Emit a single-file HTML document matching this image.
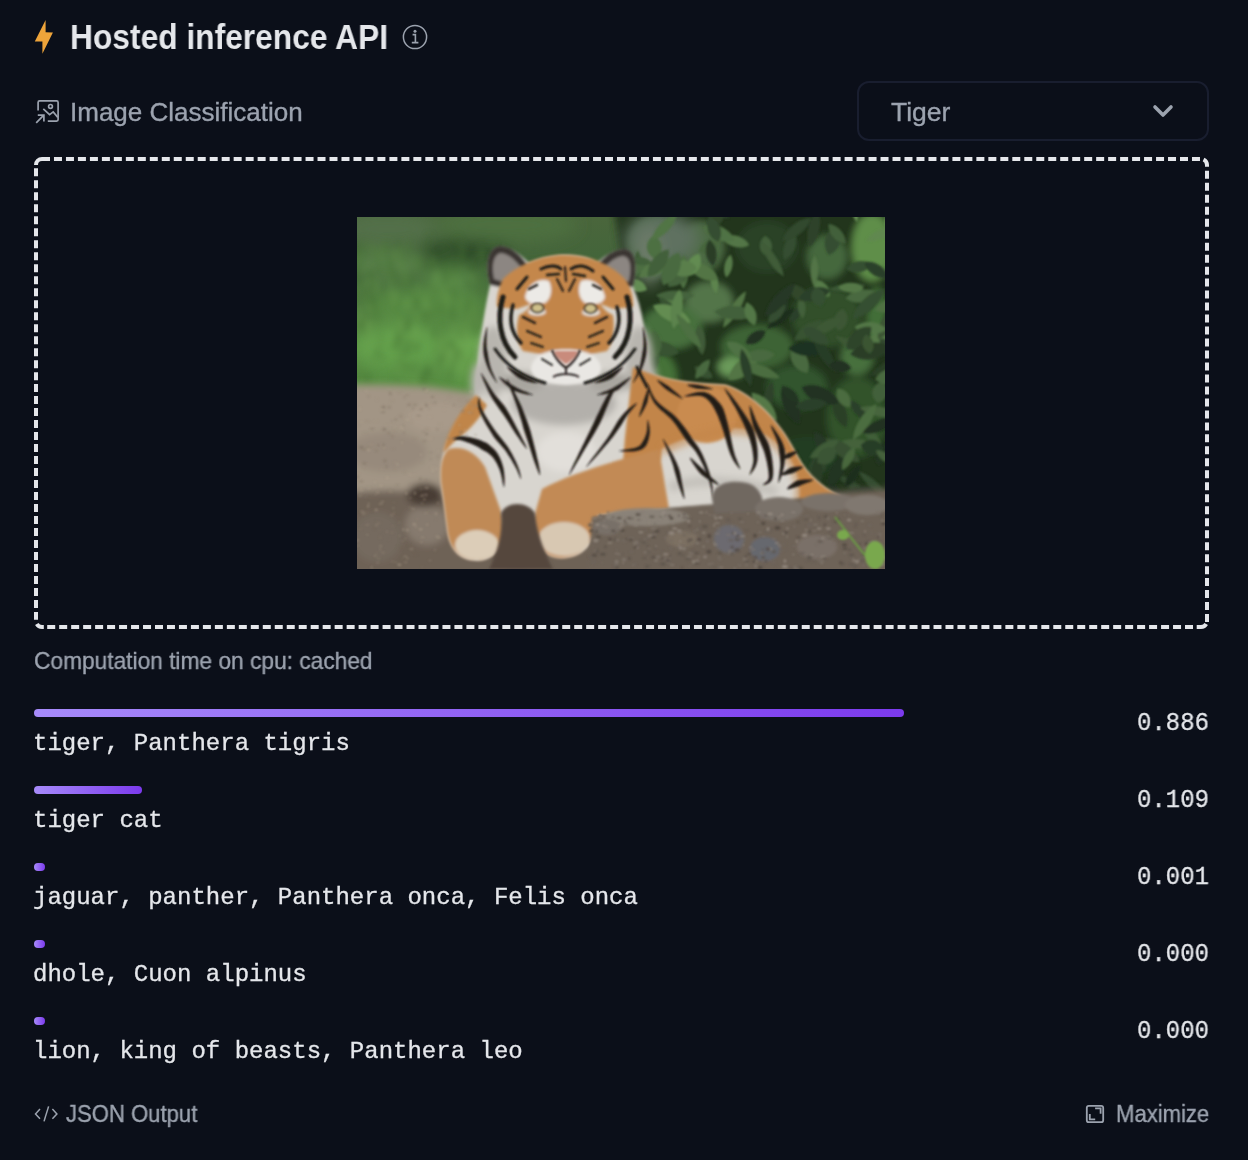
<!DOCTYPE html>
<html>
<head>
<meta charset="utf-8">
<style>
html,body{margin:0;padding:0;}
body{width:1248px;height:1160px;background:#0b0f19;position:relative;overflow:hidden;font-family:"Liberation Sans",sans-serif;}
.a{position:absolute;white-space:nowrap;line-height:1;will-change:transform;}
.sans{font-family:"Liberation Sans",sans-serif;}
.mono{font-family:"Liberation Mono",monospace;color:#e5e7eb;font-size:24px;-webkit-text-stroke:0.3px #e5e7eb;}
.gray{color:#9ca3af;-webkit-text-stroke:0.35px #9ca3af;}
.sc{font-size:25.5px;transform:scaleX(0.94);transform-origin:0 0;}
.bar{position:absolute;left:34px;height:8px;border-radius:4px;background:linear-gradient(to right,#a78bfa,#7c3aed);}
</style>
</head>
<body>
<!-- header -->
<svg class="a" style="left:30px;top:16px" width="28" height="42" viewBox="30 16 28 42">
  <path d="M45.6 20 L45.6 32.2 L52.9 32.4 L42.4 53.7 L42.4 41.6 L34.8 41.6 Z" fill="#eea43a"/>
</svg>
<div id="t1" class="a" style="left:70px;top:20px;font-size:35.5px;font-weight:bold;color:#e5e7eb;transform:scaleX(0.894);transform-origin:0 0;">Hosted inference API</div>
<svg class="a" style="left:400px;top:22px" width="30" height="30" viewBox="0 0 30 30">
  <circle cx="15" cy="15" r="11.6" fill="none" stroke="#9ca3af" stroke-width="1.5"/>
  <circle cx="15" cy="9.2" r="1.5" fill="#9ca3af"/>
  <path d="M12.6 12.6 H15.4 V20.6 M11.8 20.6 H18.4" fill="none" stroke="#9ca3af" stroke-width="1.6"/>
</svg>

<!-- task row -->
<svg class="a" style="left:34px;top:98px" width="28" height="28" viewBox="34 98 28 28">
  <g fill="none" stroke="#9ca3af" stroke-width="1.7">
    <path d="M38.1 110.6 V102.4 Q38.1 100.9 39.6 100.9 H56.6 Q58.1 100.9 58.1 102.4 V119.6 Q58.1 121.1 56.6 121.1 H47.8"/>
    <circle cx="50.5" cy="106.4" r="1.9"/>
    <path d="M43.3 108.9 L49.6 114.6 L53.2 111.9 L57.8 117.4"/>
    <path d="M36.2 122.8 L43.8 115.2 M37.8 115.2 H43.9 V121.4"/>
  </g>
</svg>
<div id="t2" class="a gray" style="left:70px;top:98.5px;font-size:26px;">Image Classification</div>

<div class="a" style="left:857px;top:81px;width:348px;height:56px;border:2px solid #191e2f;border-radius:12px;"></div>
<div id="t3" class="a gray" style="left:891px;top:98.5px;font-size:26.5px;">Tiger</div>
<svg class="a" style="left:1150px;top:100px" width="26" height="20" viewBox="1150 100 26 20">
  <path d="M1155 107 L1163 115 L1171 107" fill="none" stroke="#9ca3af" stroke-width="3.6" stroke-linecap="round" stroke-linejoin="round"/>
</svg>

<!-- dropzone -->
<svg class="a" style="left:0;top:0" width="1248" height="680" viewBox="0 0 1248 680">
  <g fill="none" stroke="#e5e7eb" stroke-width="4">
    <path d="M42 159 H1200.2" stroke-dasharray="8 3.979"/>
    <path d="M1207 170.8 V622.3" stroke-dasharray="8 3.98"/>
    <path d="M47.2 627 H1194.2" stroke-dasharray="8 3.977"/>
    <path d="M36 168.3 V619.8" stroke-dasharray="8 3.99"/>
    <path d="M36 165 A6 6 0 0 1 42 159 H42.2"/>
    <path d="M1203.54 159.56 A6 6 0 0 1 1207 165 V166.8"/>
    <path d="M1196.7 627 H1201 A6 6 0 0 0 1206.20 624.00"/>
    <path d="M36.80 624.00 A6 6 0 0 0 42 627 H43.8"/>
  </g>
</svg>
<div id="img" class="a" style="left:357px;top:217px;width:528px;height:352px;overflow:hidden;">
<svg width="528" height="352" viewBox="0 0 528 352">
<defs>
  
  <filter id="b0" x="-50%" y="-50%" width="200%" height="200%"><feGaussianBlur stdDeviation="18"/></filter>
  <filter id="b1" x="-50%" y="-50%" width="200%" height="200%"><feGaussianBlur stdDeviation="8"/></filter>
  <filter id="b2" x="-50%" y="-50%" width="200%" height="200%"><feGaussianBlur stdDeviation="3.5"/></filter>
  <filter id="b3" x="-50%" y="-50%" width="200%" height="200%"><feGaussianBlur stdDeviation="1.8"/></filter>
  <filter id="b4" x="-50%" y="-50%" width="200%" height="200%"><feGaussianBlur stdDeviation="0.9"/></filter>
  <linearGradient id="gm" x1="0" y1="0" x2="0" y2="1">
    <stop offset="0" stop-color="#4a663c"/>
    <stop offset="0.12" stop-color="#43653a"/>
    <stop offset="0.3" stop-color="#528040"/>
    <stop offset="0.55" stop-color="#5a9644"/>
    <stop offset="1" stop-color="#5e9a46"/>
  </linearGradient>
</defs>
<!-- meadow -->
<rect x="0" y="0" width="528" height="352" fill="url(#gm)"/>
<g filter="url(#b1)">
  <ellipse cx="30" cy="12" rx="50" ry="18" fill="#52704a"/>
  <ellipse cx="150" cy="8" rx="70" ry="18" fill="#4e7040"/>
  <ellipse cx="110" cy="36" rx="45" ry="12" fill="#2c4628"/>
  <ellipse cx="30" cy="48" rx="40" ry="14" fill="#58804a"/>
  <ellipse cx="70" cy="90" rx="60" ry="18" fill="#568a42"/>
  <ellipse cx="40" cy="130" rx="50" ry="22" fill="#64a04c"/>
  <ellipse cx="110" cy="135" rx="25" ry="25" fill="#6aa650"/>
  <ellipse cx="95" cy="62" rx="25" ry="12" fill="#5a8a48"/>
</g>
<g filter="url(#b2)" opacity="0.55"><path d="M39.6 165.4 l-0.9 -10.5" stroke="#4d7b39" stroke-width="2.8" stroke-linecap="round"/><path d="M120.3 171.5 l1.4 -7.6" stroke="#507f3b" stroke-width="2.4" stroke-linecap="round"/><path d="M-4.1 158.0 l-0.6 -12.6" stroke="#54843e" stroke-width="3.8" stroke-linecap="round"/><path d="M61.8 53.1 l0.8 -10.4" stroke="#355f27" stroke-width="3.8" stroke-linecap="round"/><path d="M7.9 118.4 l-2.1 -10.0" stroke="#51803b" stroke-width="2.6" stroke-linecap="round"/><path d="M70.6 161.4 l1.8 -9.9" stroke="#406c2f" stroke-width="3.9" stroke-linecap="round"/><path d="M23.6 48.0 l-0.1 -13.8" stroke="#5e8f45" stroke-width="2.1" stroke-linecap="round"/><path d="M114.6 52.8 l-0.6 -7.8" stroke="#578740" stroke-width="3.7" stroke-linecap="round"/><path d="M115.2 56.0 l0.1 -9.2" stroke="#3e692e" stroke-width="2.8" stroke-linecap="round"/><path d="M12.8 65.1 l-2.8 -13.2" stroke="#679a4b" stroke-width="3.1" stroke-linecap="round"/><path d="M104.8 35.4 l0.6 -6.9" stroke="#598941" stroke-width="3.1" stroke-linecap="round"/><path d="M85.9 73.5 l-0.4 -10.7" stroke="#54833e" stroke-width="3.3" stroke-linecap="round"/><path d="M59.8 92.2 l-0.1 -11.0" stroke="#3b662c" stroke-width="2.5" stroke-linecap="round"/><path d="M105.7 140.8 l-0.2 -7.4" stroke="#56863f" stroke-width="2.2" stroke-linecap="round"/><path d="M13.6 91.1 l0.1 -9.5" stroke="#3f6b2f" stroke-width="2.1" stroke-linecap="round"/><path d="M87.3 41.7 l0.1 -12.2" stroke="#54843e" stroke-width="2.1" stroke-linecap="round"/><path d="M68.1 83.7 l2.1 -7.1" stroke="#75aa56" stroke-width="4.0" stroke-linecap="round"/><path d="M101.2 145.7 l-0.0 -13.9" stroke="#467333" stroke-width="3.9" stroke-linecap="round"/><path d="M127.8 53.4 l-2.6 -13.4" stroke="#578740" stroke-width="2.7" stroke-linecap="round"/><path d="M104.6 52.5 l1.9 -8.2" stroke="#5c8c43" stroke-width="2.3" stroke-linecap="round"/><path d="M67.8 160.6 l0.0 -8.1" stroke="#477434" stroke-width="2.6" stroke-linecap="round"/><path d="M0.3 55.9 l1.1 -13.5" stroke="#3b662c" stroke-width="3.8" stroke-linecap="round"/><path d="M19.5 141.5 l0.8 -10.2" stroke="#416d30" stroke-width="2.7" stroke-linecap="round"/><path d="M121.6 108.8 l-2.4 -13.1" stroke="#5e8f45" stroke-width="4.0" stroke-linecap="round"/><path d="M86.3 86.0 l2.9 -8.1" stroke="#6c9f4f" stroke-width="3.2" stroke-linecap="round"/><path d="M47.2 138.6 l1.5 -7.4" stroke="#55853f" stroke-width="2.1" stroke-linecap="round"/><path d="M113.9 66.0 l0.5 -13.9" stroke="#629348" stroke-width="3.3" stroke-linecap="round"/><path d="M40.3 30.3 l0.7 -7.2" stroke="#366028" stroke-width="2.9" stroke-linecap="round"/><path d="M69.3 157.2 l0.9 -7.8" stroke="#426e31" stroke-width="2.0" stroke-linecap="round"/><path d="M-4.6 80.4 l-1.7 -8.9" stroke="#406c2f" stroke-width="3.2" stroke-linecap="round"/><path d="M80.4 59.0 l-2.2 -9.8" stroke="#507e3a" stroke-width="3.9" stroke-linecap="round"/><path d="M30.3 51.2 l2.2 -11.1" stroke="#38632a" stroke-width="3.6" stroke-linecap="round"/><path d="M53.3 67.5 l0.4 -11.2" stroke="#3a652b" stroke-width="2.7" stroke-linecap="round"/><path d="M88.6 93.0 l-1.5 -11.9" stroke="#75a955" stroke-width="3.8" stroke-linecap="round"/><path d="M1.4 105.5 l-2.6 -7.9" stroke="#53823d" stroke-width="3.6" stroke-linecap="round"/><path d="M-3.2 108.2 l-1.8 -7.1" stroke="#75aa55" stroke-width="3.2" stroke-linecap="round"/><path d="M68.5 121.1 l-1.1 -7.4" stroke="#6da050" stroke-width="2.6" stroke-linecap="round"/><path d="M2.0 156.3 l-3.0 -11.7" stroke="#6b9e4e" stroke-width="3.7" stroke-linecap="round"/><path d="M103.1 96.1 l-1.6 -9.6" stroke="#689b4c" stroke-width="2.2" stroke-linecap="round"/><path d="M28.7 35.5 l1.2 -12.0" stroke="#436f31" stroke-width="3.7" stroke-linecap="round"/><path d="M98.2 67.8 l1.7 -9.5" stroke="#5c8d44" stroke-width="3.0" stroke-linecap="round"/><path d="M33.5 121.2 l2.3 -7.7" stroke="#76ab56" stroke-width="2.0" stroke-linecap="round"/><path d="M32.8 63.5 l1.5 -13.6" stroke="#689b4c" stroke-width="2.7" stroke-linecap="round"/><path d="M122.6 76.7 l0.8 -13.3" stroke="#497635" stroke-width="3.4" stroke-linecap="round"/><path d="M91.5 169.0 l1.2 -12.7" stroke="#578740" stroke-width="3.7" stroke-linecap="round"/><path d="M58.4 132.9 l-1.7 -8.5" stroke="#5d8e44" stroke-width="3.2" stroke-linecap="round"/><path d="M6.3 159.3 l-2.4 -6.2" stroke="#436f31" stroke-width="3.9" stroke-linecap="round"/><path d="M45.0 50.1 l1.2 -6.3" stroke="#356028" stroke-width="3.3" stroke-linecap="round"/><path d="M96.1 134.6 l-0.8 -10.7" stroke="#3e692d" stroke-width="3.6" stroke-linecap="round"/><path d="M113.8 156.6 l2.5 -12.9" stroke="#3e692e" stroke-width="3.9" stroke-linecap="round"/><path d="M10.5 59.2 l2.1 -6.3" stroke="#39642a" stroke-width="3.6" stroke-linecap="round"/><path d="M87.0 147.2 l-2.4 -8.3" stroke="#619347" stroke-width="2.2" stroke-linecap="round"/><path d="M104.8 59.1 l-2.9 -9.4" stroke="#426f31" stroke-width="2.5" stroke-linecap="round"/><path d="M36.0 131.6 l2.8 -8.6" stroke="#51803b" stroke-width="3.0" stroke-linecap="round"/><path d="M118.4 117.8 l-0.4 -9.3" stroke="#3b672c" stroke-width="3.5" stroke-linecap="round"/><path d="M45.3 130.1 l2.2 -7.7" stroke="#5b8c43" stroke-width="2.2" stroke-linecap="round"/><path d="M113.9 54.2 l1.6 -7.6" stroke="#345e27" stroke-width="4.0" stroke-linecap="round"/><path d="M-4.4 99.7 l-1.9 -12.4" stroke="#588941" stroke-width="3.0" stroke-linecap="round"/><path d="M45.3 148.1 l-1.3 -13.6" stroke="#4a7836" stroke-width="2.4" stroke-linecap="round"/><path d="M96.4 100.8 l-2.5 -11.1" stroke="#406d30" stroke-width="3.6" stroke-linecap="round"/><path d="M96.1 141.7 l-0.6 -8.8" stroke="#619347" stroke-width="2.8" stroke-linecap="round"/><path d="M124.1 42.2 l-1.8 -6.2" stroke="#5b8c43" stroke-width="2.5" stroke-linecap="round"/><path d="M50.0 155.5 l0.2 -9.7" stroke="#487635" stroke-width="3.5" stroke-linecap="round"/><path d="M104.2 121.8 l-2.1 -8.6" stroke="#4f7e3a" stroke-width="3.7" stroke-linecap="round"/><path d="M91.0 135.4 l1.6 -9.5" stroke="#447132" stroke-width="3.2" stroke-linecap="round"/><path d="M13.3 95.6 l-1.9 -7.9" stroke="#71a653" stroke-width="2.6" stroke-linecap="round"/><path d="M97.0 149.8 l-1.5 -7.2" stroke="#437032" stroke-width="2.7" stroke-linecap="round"/><path d="M70.7 52.9 l2.9 -7.5" stroke="#436f31" stroke-width="3.5" stroke-linecap="round"/><path d="M9.8 166.7 l2.9 -9.1" stroke="#406c2f" stroke-width="3.6" stroke-linecap="round"/><path d="M101.3 91.8 l-2.4 -11.1" stroke="#467333" stroke-width="2.4" stroke-linecap="round"/><path d="M51.3 34.8 l1.2 -12.3" stroke="#467333" stroke-width="3.0" stroke-linecap="round"/><path d="M86.7 95.8 l-0.6 -10.8" stroke="#426f31" stroke-width="3.5" stroke-linecap="round"/><path d="M78.2 136.4 l1.3 -7.8" stroke="#54833e" stroke-width="3.8" stroke-linecap="round"/><path d="M107.2 129.4 l0.8 -11.4" stroke="#6fa351" stroke-width="2.9" stroke-linecap="round"/><path d="M40.4 119.2 l1.7 -9.4" stroke="#406c2f" stroke-width="3.4" stroke-linecap="round"/><path d="M86.3 65.5 l0.7 -9.6" stroke="#54843e" stroke-width="2.8" stroke-linecap="round"/><path d="M92.9 162.1 l1.7 -11.2" stroke="#457233" stroke-width="2.8" stroke-linecap="round"/><path d="M66.0 168.4 l-2.0 -10.3" stroke="#3c672c" stroke-width="3.6" stroke-linecap="round"/><path d="M9.7 111.6 l0.1 -11.7" stroke="#5c8c43" stroke-width="3.3" stroke-linecap="round"/><path d="M115.2 104.1 l-1.7 -13.6" stroke="#53833d" stroke-width="3.4" stroke-linecap="round"/><path d="M51.9 138.3 l-0.9 -13.9" stroke="#416d30" stroke-width="2.1" stroke-linecap="round"/><path d="M34.8 86.8 l-0.5 -9.3" stroke="#3a652b" stroke-width="3.4" stroke-linecap="round"/><path d="M46.1 67.7 l2.6 -11.9" stroke="#487535" stroke-width="3.1" stroke-linecap="round"/><path d="M26.7 143.8 l-2.2 -7.7" stroke="#52813c" stroke-width="3.6" stroke-linecap="round"/><path d="M112.4 120.1 l-1.6 -10.5" stroke="#578740" stroke-width="3.9" stroke-linecap="round"/><path d="M46.2 120.7 l-0.2 -12.5" stroke="#6da150" stroke-width="2.6" stroke-linecap="round"/><path d="M74.5 47.8 l2.1 -8.8" stroke="#598941" stroke-width="2.5" stroke-linecap="round"/><path d="M49.5 66.0 l-3.0 -7.5" stroke="#54843e" stroke-width="3.4" stroke-linecap="round"/><path d="M35.8 64.8 l-0.4 -9.8" stroke="#4d7b38" stroke-width="3.3" stroke-linecap="round"/><path d="M90.6 81.5 l-2.7 -12.8" stroke="#74a955" stroke-width="3.7" stroke-linecap="round"/><path d="M15.4 148.0 l-2.9 -6.1" stroke="#619347" stroke-width="3.9" stroke-linecap="round"/><path d="M90.1 65.5 l-1.6 -7.1" stroke="#406c2f" stroke-width="3.6" stroke-linecap="round"/><path d="M45.2 51.7 l-2.0 -12.3" stroke="#5c8d43" stroke-width="3.8" stroke-linecap="round"/><path d="M83.2 140.9 l1.7 -13.2" stroke="#649649" stroke-width="3.7" stroke-linecap="round"/><path d="M23.6 128.4 l-0.4 -11.9" stroke="#5b8c43" stroke-width="3.8" stroke-linecap="round"/><path d="M75.5 67.6 l-0.0 -7.1" stroke="#487635" stroke-width="2.1" stroke-linecap="round"/><path d="M62.7 50.5 l0.2 -10.0" stroke="#4a7736" stroke-width="3.7" stroke-linecap="round"/><path d="M-4.0 149.4 l1.0 -10.5" stroke="#578740" stroke-width="3.7" stroke-linecap="round"/><path d="M49.4 89.5 l0.8 -6.6" stroke="#76ab56" stroke-width="3.3" stroke-linecap="round"/><path d="M-0.9 116.6 l-1.0 -13.5" stroke="#65974a" stroke-width="4.0" stroke-linecap="round"/><path d="M69.0 98.8 l1.3 -6.3" stroke="#72a653" stroke-width="3.3" stroke-linecap="round"/><path d="M44.1 152.4 l0.2 -9.8" stroke="#517f3b" stroke-width="3.5" stroke-linecap="round"/><path d="M25.6 91.8 l2.0 -10.4" stroke="#54843e" stroke-width="2.6" stroke-linecap="round"/><path d="M115.0 87.3 l0.0 -8.2" stroke="#598a41" stroke-width="3.9" stroke-linecap="round"/><path d="M89.9 142.5 l-1.2 -8.5" stroke="#4e7d3a" stroke-width="3.2" stroke-linecap="round"/><path d="M87.0 141.4 l2.3 -11.8" stroke="#3c672c" stroke-width="3.1" stroke-linecap="round"/><path d="M2.2 72.7 l2.5 -7.5" stroke="#3a652b" stroke-width="3.2" stroke-linecap="round"/><path d="M90.4 142.0 l0.7 -10.9" stroke="#73a754" stroke-width="3.3" stroke-linecap="round"/><path d="M96.0 114.7 l1.0 -7.7" stroke="#649749" stroke-width="2.9" stroke-linecap="round"/><path d="M105.6 44.4 l1.6 -6.3" stroke="#3c682c" stroke-width="3.8" stroke-linecap="round"/><path d="M90.1 82.4 l0.4 -12.3" stroke="#6da150" stroke-width="2.5" stroke-linecap="round"/><path d="M38.8 89.9 l0.9 -9.4" stroke="#4e7c39" stroke-width="3.9" stroke-linecap="round"/><path d="M2.9 110.6 l1.9 -7.0" stroke="#3c672c" stroke-width="3.2" stroke-linecap="round"/><path d="M-3.0 85.0 l2.9 -13.5" stroke="#5f9045" stroke-width="3.0" stroke-linecap="round"/><path d="M54.8 44.5 l-2.1 -7.7" stroke="#517f3b" stroke-width="2.0" stroke-linecap="round"/><path d="M-4.3 127.1 l-2.5 -13.7" stroke="#416d30" stroke-width="3.7" stroke-linecap="round"/><path d="M13.7 32.5 l1.4 -7.9" stroke="#54833e" stroke-width="2.4" stroke-linecap="round"/><path d="M2.3 139.9 l1.4 -12.8" stroke="#66994b" stroke-width="2.2" stroke-linecap="round"/><path d="M86.2 130.7 l-1.5 -13.5" stroke="#57863f" stroke-width="3.9" stroke-linecap="round"/><path d="M99.0 31.6 l1.9 -11.2" stroke="#355f27" stroke-width="2.2" stroke-linecap="round"/><path d="M40.1 133.6 l-0.1 -12.9" stroke="#447132" stroke-width="2.1" stroke-linecap="round"/><path d="M48.3 111.6 l-2.1 -11.4" stroke="#55853e" stroke-width="3.6" stroke-linecap="round"/><path d="M47.7 121.6 l-0.7 -9.3" stroke="#619347" stroke-width="3.6" stroke-linecap="round"/><path d="M77.2 71.5 l1.2 -13.8" stroke="#3d692d" stroke-width="3.7" stroke-linecap="round"/><path d="M43.1 116.0 l0.6 -12.7" stroke="#77ac57" stroke-width="2.6" stroke-linecap="round"/><path d="M57.1 156.1 l0.6 -11.5" stroke="#51803c" stroke-width="3.8" stroke-linecap="round"/><path d="M112.1 70.2 l-0.5 -8.1" stroke="#3a652b" stroke-width="3.2" stroke-linecap="round"/><path d="M113.3 156.0 l1.9 -12.7" stroke="#3c682c" stroke-width="3.7" stroke-linecap="round"/><path d="M77.9 68.9 l1.1 -12.5" stroke="#6fa351" stroke-width="3.8" stroke-linecap="round"/><path d="M45.3 42.1 l-1.8 -12.4" stroke="#4d7b38" stroke-width="3.5" stroke-linecap="round"/><path d="M83.0 126.2 l-1.5 -7.7" stroke="#578740" stroke-width="3.5" stroke-linecap="round"/><path d="M109.8 95.3 l1.6 -12.5" stroke="#3f6b2e" stroke-width="2.5" stroke-linecap="round"/><path d="M79.0 157.4 l-0.1 -10.2" stroke="#71a653" stroke-width="3.2" stroke-linecap="round"/><path d="M22.4 57.3 l-0.8 -11.6" stroke="#3c672c" stroke-width="3.1" stroke-linecap="round"/><path d="M53.4 103.4 l3.0 -6.4" stroke="#436f31" stroke-width="2.7" stroke-linecap="round"/><path d="M10.4 119.8 l0.6 -7.2" stroke="#6b9e4e" stroke-width="2.7" stroke-linecap="round"/><path d="M70.3 32.9 l2.2 -13.9" stroke="#366028" stroke-width="3.0" stroke-linecap="round"/><path d="M77.2 67.1 l2.7 -9.4" stroke="#6b9e4e" stroke-width="3.5" stroke-linecap="round"/><path d="M113.7 166.8 l-1.8 -6.3" stroke="#4a7736" stroke-width="2.4" stroke-linecap="round"/><path d="M7.1 37.2 l-0.3 -13.0" stroke="#4d7b38" stroke-width="3.9" stroke-linecap="round"/><path d="M126.9 39.1 l-2.3 -9.2" stroke="#4e7d3a" stroke-width="3.9" stroke-linecap="round"/><path d="M32.3 110.2 l1.0 -13.7" stroke="#629448" stroke-width="2.8" stroke-linecap="round"/><path d="M60.0 52.7 l-1.7 -13.9" stroke="#5f9045" stroke-width="2.1" stroke-linecap="round"/><path d="M32.1 80.0 l2.0 -13.2" stroke="#72a754" stroke-width="2.1" stroke-linecap="round"/><path d="M109.0 130.8 l-2.7 -13.9" stroke="#629448" stroke-width="2.3" stroke-linecap="round"/><path d="M104.5 163.4 l0.5 -8.4" stroke="#649649" stroke-width="3.5" stroke-linecap="round"/><path d="M10.3 76.0 l-0.1 -7.0" stroke="#4a7736" stroke-width="2.3" stroke-linecap="round"/><path d="M29.6 50.3 l1.3 -6.1" stroke="#52813c" stroke-width="2.4" stroke-linecap="round"/><path d="M0.2 161.7 l2.2 -13.5" stroke="#477535" stroke-width="3.8" stroke-linecap="round"/><path d="M15.3 93.5 l2.1 -13.4" stroke="#406c2f" stroke-width="3.3" stroke-linecap="round"/><path d="M60.6 78.2 l0.8 -9.8" stroke="#6da150" stroke-width="2.3" stroke-linecap="round"/><path d="M27.1 38.1 l-2.1 -10.4" stroke="#54833d" stroke-width="3.7" stroke-linecap="round"/><path d="M33.6 88.5 l2.0 -8.2" stroke="#437032" stroke-width="2.7" stroke-linecap="round"/><path d="M19.3 99.7 l-2.3 -13.2" stroke="#4e7c39" stroke-width="4.0" stroke-linecap="round"/><path d="M3.2 157.1 l-0.1 -7.7" stroke="#649649" stroke-width="2.6" stroke-linecap="round"/><path d="M32.4 58.6 l3.0 -13.9" stroke="#447132" stroke-width="3.9" stroke-linecap="round"/><path d="M9.1 71.1 l1.4 -6.5" stroke="#72a653" stroke-width="2.6" stroke-linecap="round"/><path d="M136.9 32.3 l-2.2 -8.7" stroke="#588840" stroke-width="2.0" stroke-linecap="round"/><path d="M115.7 104.8 l2.5 -9.5" stroke="#457233" stroke-width="2.4" stroke-linecap="round"/><path d="M77.8 49.6 l1.3 -12.2" stroke="#3c672c" stroke-width="2.4" stroke-linecap="round"/><path d="M6.5 42.4 l-1.4 -10.0" stroke="#4f7e3a" stroke-width="2.4" stroke-linecap="round"/><path d="M83.8 130.5 l-1.8 -10.7" stroke="#6da04f" stroke-width="2.1" stroke-linecap="round"/><path d="M101.2 88.0 l1.9 -6.4" stroke="#679a4b" stroke-width="2.7" stroke-linecap="round"/><path d="M117.1 152.8 l2.5 -6.1" stroke="#598941" stroke-width="3.0" stroke-linecap="round"/><path d="M121.4 67.8 l-0.8 -12.7" stroke="#457233" stroke-width="2.3" stroke-linecap="round"/><path d="M48.8 114.5 l-0.3 -10.2" stroke="#3a652b" stroke-width="3.0" stroke-linecap="round"/><path d="M12.5 131.5 l-1.1 -12.9" stroke="#6da150" stroke-width="3.4" stroke-linecap="round"/><path d="M50.3 136.7 l2.7 -13.0" stroke="#3d692d" stroke-width="3.0" stroke-linecap="round"/><path d="M69.4 105.3 l2.8 -6.2" stroke="#5b8c43" stroke-width="2.4" stroke-linecap="round"/><path d="M21.4 44.6 l-2.8 -12.5" stroke="#3f6b2f" stroke-width="2.2" stroke-linecap="round"/><path d="M96.4 57.7 l0.5 -10.8" stroke="#355f27" stroke-width="3.0" stroke-linecap="round"/><path d="M96.9 44.6 l-2.7 -11.7" stroke="#5a8b42" stroke-width="2.2" stroke-linecap="round"/><path d="M66.6 101.1 l-0.6 -7.0" stroke="#4b7937" stroke-width="2.3" stroke-linecap="round"/><path d="M80.8 152.3 l1.5 -10.6" stroke="#436f31" stroke-width="2.3" stroke-linecap="round"/><path d="M114.8 163.1 l2.0 -9.4" stroke="#52813c" stroke-width="3.1" stroke-linecap="round"/><path d="M52.4 163.7 l-1.6 -8.7" stroke="#6a9e4e" stroke-width="2.7" stroke-linecap="round"/><path d="M58.2 169.3 l1.9 -13.3" stroke="#6ca04f" stroke-width="3.7" stroke-linecap="round"/><path d="M2.8 103.5 l-1.5 -13.5" stroke="#76ab56" stroke-width="2.8" stroke-linecap="round"/><path d="M86.7 81.7 l-0.4 -6.6" stroke="#5b8c43" stroke-width="3.0" stroke-linecap="round"/><path d="M-2.0 49.8 l2.6 -12.2" stroke="#5f9045" stroke-width="3.3" stroke-linecap="round"/><path d="M112.3 155.6 l0.8 -6.3" stroke="#71a653" stroke-width="2.5" stroke-linecap="round"/><path d="M93.4 68.8 l0.7 -13.4" stroke="#5c8c43" stroke-width="2.5" stroke-linecap="round"/><path d="M70.4 91.6 l-1.2 -8.3" stroke="#75aa56" stroke-width="3.3" stroke-linecap="round"/><path d="M12.5 114.4 l-1.4 -10.1" stroke="#76ab56" stroke-width="2.9" stroke-linecap="round"/><path d="M72.4 51.1 l-1.2 -7.1" stroke="#3a652b" stroke-width="2.8" stroke-linecap="round"/><path d="M36.8 64.6 l2.0 -10.4" stroke="#3f6b2e" stroke-width="3.2" stroke-linecap="round"/><path d="M77.7 122.4 l-0.2 -11.7" stroke="#467334" stroke-width="3.1" stroke-linecap="round"/><path d="M83.9 96.6 l-1.7 -7.9" stroke="#4d7b39" stroke-width="3.0" stroke-linecap="round"/><path d="M50.6 113.2 l2.2 -8.8" stroke="#3a652b" stroke-width="2.5" stroke-linecap="round"/><path d="M75.7 99.8 l-1.2 -13.9" stroke="#4b7937" stroke-width="3.5" stroke-linecap="round"/><path d="M18.0 39.5 l-2.6 -9.5" stroke="#5b8b42" stroke-width="2.8" stroke-linecap="round"/><path d="M58.8 134.4 l2.8 -7.8" stroke="#406d2f" stroke-width="3.5" stroke-linecap="round"/><path d="M17.4 77.9 l0.7 -11.4" stroke="#507e3b" stroke-width="3.7" stroke-linecap="round"/><path d="M114.1 103.5 l1.6 -11.9" stroke="#689b4c" stroke-width="3.0" stroke-linecap="round"/><path d="M108.8 130.6 l2.2 -7.0" stroke="#73a854" stroke-width="2.0" stroke-linecap="round"/><path d="M106.0 113.2 l0.4 -13.7" stroke="#598941" stroke-width="2.8" stroke-linecap="round"/><path d="M108.6 153.9 l-0.3 -9.0" stroke="#609146" stroke-width="2.9" stroke-linecap="round"/><path d="M99.8 71.6 l-0.7 -10.4" stroke="#52813c" stroke-width="2.6" stroke-linecap="round"/><path d="M109.1 150.6 l-1.9 -9.6" stroke="#598941" stroke-width="2.6" stroke-linecap="round"/><path d="M16.0 111.7 l2.5 -6.7" stroke="#5e8f45" stroke-width="2.6" stroke-linecap="round"/><path d="M117.3 149.0 l-0.4 -7.6" stroke="#76ab56" stroke-width="3.8" stroke-linecap="round"/><path d="M-3.4 36.7 l2.5 -10.0" stroke="#4d7b39" stroke-width="3.5" stroke-linecap="round"/><path d="M73.1 171.8 l1.1 -10.1" stroke="#5a8b42" stroke-width="2.8" stroke-linecap="round"/><path d="M46.9 114.5 l1.1 -13.6" stroke="#507e3a" stroke-width="3.1" stroke-linecap="round"/><path d="M9.4 83.2 l0.4 -10.5" stroke="#53823d" stroke-width="3.8" stroke-linecap="round"/><path d="M58.8 118.7 l0.2 -8.7" stroke="#78ae58" stroke-width="3.6" stroke-linecap="round"/><path d="M19.8 75.2 l0.1 -12.6" stroke="#77ac57" stroke-width="2.2" stroke-linecap="round"/><path d="M114.0 170.6 l-2.1 -9.4" stroke="#71a653" stroke-width="2.6" stroke-linecap="round"/><path d="M69.2 101.7 l0.8 -7.5" stroke="#457233" stroke-width="3.2" stroke-linecap="round"/><path d="M46.2 171.1 l-0.5 -6.3" stroke="#629347" stroke-width="3.6" stroke-linecap="round"/><path d="M39.5 128.1 l2.1 -8.4" stroke="#3a652b" stroke-width="3.2" stroke-linecap="round"/><path d="M91.9 57.9 l-1.4 -10.4" stroke="#4a7836" stroke-width="3.3" stroke-linecap="round"/><path d="M72.1 171.6 l-2.3 -9.3" stroke="#5e8f45" stroke-width="2.3" stroke-linecap="round"/><path d="M105.1 45.1 l0.1 -7.4" stroke="#39632a" stroke-width="3.6" stroke-linecap="round"/><path d="M83.9 144.5 l1.6 -6.1" stroke="#3d692d" stroke-width="2.6" stroke-linecap="round"/><path d="M98.7 80.2 l-2.4 -8.1" stroke="#447132" stroke-width="3.8" stroke-linecap="round"/><path d="M79.4 79.5 l-2.7 -9.1" stroke="#56863f" stroke-width="3.8" stroke-linecap="round"/><path d="M79.5 166.3 l-1.5 -11.0" stroke="#55853f" stroke-width="2.1" stroke-linecap="round"/><path d="M40.6 157.6 l0.6 -8.4" stroke="#6da050" stroke-width="3.9" stroke-linecap="round"/><path d="M66.9 164.9 l1.3 -9.1" stroke="#497636" stroke-width="2.4" stroke-linecap="round"/><path d="M39.8 154.3 l-1.5 -12.3" stroke="#588841" stroke-width="2.3" stroke-linecap="round"/><path d="M47.0 56.5 l0.4 -8.3" stroke="#5f9046" stroke-width="2.2" stroke-linecap="round"/><path d="M72.4 84.8 l-2.3 -6.5" stroke="#53823d" stroke-width="3.7" stroke-linecap="round"/><path d="M45.9 64.8 l-1.6 -8.3" stroke="#467333" stroke-width="2.1" stroke-linecap="round"/><path d="M91.3 78.5 l-2.4 -11.6" stroke="#437032" stroke-width="2.5" stroke-linecap="round"/><path d="M116.1 48.1 l1.8 -12.7" stroke="#487535" stroke-width="2.3" stroke-linecap="round"/><path d="M46.2 132.6 l-1.8 -13.7" stroke="#51803c" stroke-width="3.9" stroke-linecap="round"/><path d="M68.2 62.3 l1.2 -7.0" stroke="#56863f" stroke-width="2.5" stroke-linecap="round"/><path d="M48.4 65.0 l2.2 -7.7" stroke="#609146" stroke-width="2.2" stroke-linecap="round"/><path d="M69.4 107.0 l-0.7 -12.2" stroke="#4b7837" stroke-width="3.3" stroke-linecap="round"/><path d="M77.3 74.1 l-1.9 -6.7" stroke="#52813c" stroke-width="3.7" stroke-linecap="round"/><path d="M41.6 124.1 l-0.8 -10.5" stroke="#406d2f" stroke-width="3.0" stroke-linecap="round"/><path d="M38.1 39.4 l-2.2 -7.8" stroke="#426e31" stroke-width="3.4" stroke-linecap="round"/><path d="M35.9 87.3 l2.3 -12.2" stroke="#73a754" stroke-width="3.7" stroke-linecap="round"/><path d="M14.2 69.3 l1.0 -11.4" stroke="#3b672c" stroke-width="2.7" stroke-linecap="round"/><path d="M54.8 123.6 l2.1 -8.0" stroke="#66984a" stroke-width="2.7" stroke-linecap="round"/><path d="M86.2 55.8 l1.4 -13.3" stroke="#39642a" stroke-width="3.4" stroke-linecap="round"/><path d="M0.9 35.7 l-1.2 -7.6" stroke="#3b672c" stroke-width="2.8" stroke-linecap="round"/><path d="M0.7 74.2 l2.0 -7.4" stroke="#629348" stroke-width="3.1" stroke-linecap="round"/><path d="M98.9 66.2 l-0.9 -11.5" stroke="#55843e" stroke-width="2.0" stroke-linecap="round"/><path d="M116.0 140.3 l2.1 -6.3" stroke="#4c7a38" stroke-width="3.2" stroke-linecap="round"/><path d="M1.9 64.7 l-1.7 -12.3" stroke="#416d30" stroke-width="3.8" stroke-linecap="round"/><path d="M103.7 42.2 l1.5 -9.1" stroke="#53823d" stroke-width="3.7" stroke-linecap="round"/><path d="M35.8 42.8 l2.6 -9.4" stroke="#5e8f45" stroke-width="3.4" stroke-linecap="round"/><path d="M102.1 147.9 l-2.7 -9.6" stroke="#619347" stroke-width="3.4" stroke-linecap="round"/><path d="M57.1 102.7 l1.6 -7.0" stroke="#74a955" stroke-width="2.1" stroke-linecap="round"/><path d="M96.9 144.4 l2.8 -10.4" stroke="#4a7836" stroke-width="3.3" stroke-linecap="round"/></g>
<!-- foliage right -->
<g filter="url(#b2)">
  <path d="M255 -20 H560 V300 H300 L285 180 Z" fill="#24361f"/>
  <ellipse cx="298" cy="30" rx="26" ry="30" fill="#4a6a44"/>
  <ellipse cx="345" cy="30" rx="22" ry="25" fill="#4c6a42"/>
  <ellipse cx="352" cy="85" rx="24" ry="20" fill="#527448"/>
  <ellipse cx="315" cy="110" rx="30" ry="22" fill="#46703c"/>
  <ellipse cx="300" cy="160" rx="20" ry="25" fill="#447238"/>
  <ellipse cx="410" cy="30" rx="30" ry="25" fill="#2a4228"/>
  <ellipse cx="470" cy="100" rx="35" ry="30" fill="#30502c"/>
  <ellipse cx="470" cy="40" rx="20" ry="22" fill="#45683c"/>
  <ellipse cx="515" cy="30" rx="20" ry="34" fill="#5e8e48"/>
  <ellipse cx="400" cy="130" rx="36" ry="22" fill="#3c6434"/>
  <ellipse cx="440" cy="170" rx="30" ry="22" fill="#33552e"/>
  <ellipse cx="500" cy="200" rx="30" ry="40" fill="#30522c"/>
  <ellipse cx="500" cy="140" rx="16" ry="18" fill="#46703c"/>
  <ellipse cx="450" cy="240" rx="30" ry="20" fill="#223e22"/>
  <ellipse cx="375" cy="150" rx="14" ry="10" fill="#6a9a5a"/>
  <ellipse cx="520" cy="100" rx="10" ry="30" fill="#426e38"/>
</g>
<g filter="url(#b1)">
  <ellipse cx="305" cy="22" rx="38" ry="26" fill="#5e7160"/>
  <ellipse cx="292" cy="40" rx="12" ry="30" fill="#6e7d6a"/>
</g>
<g filter="url(#b4)"><path transform="translate(352.0 30.3) rotate(66)" d="M0 -10.9 C8.2 -5.4 8.2 5.4 0 10.9 C-8.2 5.4 -8.2 -5.4 0 -10.9Z" fill="#47663d"/><path transform="translate(278.1 137.2) rotate(16)" d="M0 -15.2 C5.4 -7.6 5.4 7.6 0 15.2 C-5.4 7.6 -5.4 -7.6 0 -15.2Z" fill="#395333"/><path transform="translate(296.4 52.0) rotate(71)" d="M0 -21.4 C8.5 -10.7 8.5 10.7 0 21.4 C-8.5 10.7 -8.5 -10.7 0 -21.4Z" fill="#547747"/><path transform="translate(533.4 -1.0) rotate(21)" d="M0 -13.5 C5.9 -6.7 5.9 6.7 0 13.5 C-5.9 6.7 -5.9 -6.7 0 -13.5Z" fill="#6c9858"/><path transform="translate(439.6 96.7) rotate(37)" d="M0 -10.8 C5.4 -5.4 5.4 5.4 0 10.8 C-5.4 5.4 -5.4 -5.4 0 -10.8Z" fill="#2c412a"/><path transform="translate(451.2 113.3) rotate(54)" d="M0 -17.0 C7.7 -8.5 7.7 8.5 0 17.0 C-7.7 8.5 -7.7 -8.5 0 -17.0Z" fill="#385232"/><path transform="translate(482.8 194.7) rotate(158)" d="M0 -16.9 C8.2 -8.4 8.2 8.4 0 16.9 C-8.2 8.4 -8.2 -8.4 0 -16.9Z" fill="#2a3f28"/><path transform="translate(464.8 71.4) rotate(136)" d="M0 -11.4 C7.5 -5.7 7.5 5.7 0 11.4 C-7.5 5.7 -7.5 -5.7 0 -11.4Z" fill="#567b48"/><path transform="translate(304.3 131.7) rotate(103)" d="M0 -18.0 C9.6 -9.0 9.6 9.0 0 18.0 C-9.6 9.0 -9.6 -9.0 0 -18.0Z" fill="#395333"/><path transform="translate(505.4 79.1) rotate(82)" d="M0 -17.1 C8.5 -8.6 8.5 8.6 0 17.1 C-8.5 8.6 -8.5 -8.6 0 -17.1Z" fill="#49693f"/><path transform="translate(495.5 268.4) rotate(126)" d="M0 -18.0 C5.4 -9.0 5.4 9.0 0 18.0 C-5.4 9.0 -5.4 -9.0 0 -18.0Z" fill="#32492e"/><path transform="translate(490.5 70.4) rotate(83)" d="M0 -18.0 C5.1 -9.0 5.1 9.0 0 18.0 C-5.1 9.0 -5.1 -9.0 0 -18.0Z" fill="#3b5635"/><path transform="translate(475.6 23.8) rotate(15)" d="M0 -14.7 C10.2 -7.3 10.2 7.3 0 14.7 C-10.2 7.3 -10.2 -7.3 0 -14.7Z" fill="#354d30"/><path transform="translate(386.9 149.8) rotate(50)" d="M0 -19.8 C10.2 -9.9 10.2 9.9 0 19.8 C-10.2 9.9 -10.2 -9.9 0 -19.8Z" fill="#527545"/><path transform="translate(377.5 92.6) rotate(32)" d="M0 -21.5 C5.9 -10.7 5.9 10.7 0 21.5 C-5.9 10.7 -5.9 -10.7 0 -21.5Z" fill="#527545"/><path transform="translate(326.5 55.0) rotate(1)" d="M0 -17.1 C6.6 -8.5 6.6 8.5 0 17.1 C-6.6 8.5 -6.6 -8.5 0 -17.1Z" fill="#4d6f42"/><path transform="translate(378.5 95.8) rotate(93)" d="M0 -21.4 C9.1 -10.7 9.1 10.7 0 21.4 C-9.1 10.7 -9.1 -10.7 0 -21.4Z" fill="#43613b"/><path transform="translate(433.7 187.9) rotate(157)" d="M0 -20.8 C9.7 -10.4 9.7 10.4 0 20.8 C-9.7 10.4 -9.7 -10.4 0 -20.8Z" fill="#223322"/><path transform="translate(483.8 102.7) rotate(11)" d="M0 -11.2 C8.8 -5.6 8.8 5.6 0 11.2 C-8.8 5.6 -8.8 -5.6 0 -11.2Z" fill="#3c5735"/><path transform="translate(280.7 47.6) rotate(0)" d="M0 -14.1 C5.3 -7.0 5.3 7.0 0 14.1 C-5.3 7.0 -5.3 -7.0 0 -14.1Z" fill="#3f5b37"/><path transform="translate(432.7 29.6) rotate(22)" d="M0 -14.2 C7.2 -7.1 7.2 7.1 0 14.2 C-7.2 7.1 -7.2 -7.1 0 -14.2Z" fill="#354e30"/><path transform="translate(498.0 282.9) rotate(18)" d="M0 -15.8 C5.5 -7.9 5.5 7.9 0 15.8 C-5.5 7.9 -5.5 -7.9 0 -15.8Z" fill="#31482d"/><path transform="translate(357.3 64.4) rotate(171)" d="M0 -11.9 C5.1 -6.0 5.1 6.0 0 11.9 C-5.1 6.0 -5.1 -6.0 0 -11.9Z" fill="#5d844d"/><path transform="translate(408.9 29.0) rotate(176)" d="M0 -10.3 C8.2 -5.2 8.2 5.2 0 10.3 C-8.2 5.2 -8.2 -5.2 0 -10.3Z" fill="#42603a"/><path transform="translate(502.0 193.9) rotate(139)" d="M0 -14.4 C6.0 -7.2 6.0 7.2 0 14.4 C-6.0 7.2 -6.0 -7.2 0 -14.4Z" fill="#2b4029"/><path transform="translate(410.1 218.7) rotate(177)" d="M0 -12.7 C9.9 -6.3 9.9 6.3 0 12.7 C-9.9 6.3 -9.9 -6.3 0 -12.7Z" fill="#395333"/><path transform="translate(499.0 226.8) rotate(93)" d="M0 -18.9 C6.4 -9.4 6.4 9.4 0 18.9 C-6.4 9.4 -6.4 -9.4 0 -18.9Z" fill="#44623b"/><path transform="translate(360.8 -6.3) rotate(125)" d="M0 -13.4 C6.6 -6.7 6.6 6.7 0 13.4 C-6.6 6.7 -6.6 -6.7 0 -13.4Z" fill="#2b4029"/><path transform="translate(527.9 119.2) rotate(66)" d="M0 -21.9 C10.7 -10.9 10.7 10.9 0 21.9 C-10.7 10.9 -10.7 -10.9 0 -21.9Z" fill="#547847"/><path transform="translate(323.3 53.1) rotate(162)" d="M0 -12.5 C8.7 -6.2 8.7 6.2 0 12.5 C-8.7 6.2 -8.7 -6.2 0 -12.5Z" fill="#405d38"/><path transform="translate(495.6 128.8) rotate(119)" d="M0 -19.6 C5.5 -9.8 5.5 9.8 0 19.6 C-5.5 9.8 -5.5 -9.8 0 -19.6Z" fill="#3d5836"/><path transform="translate(514.9 219.7) rotate(142)" d="M0 -15.7 C6.1 -7.9 6.1 7.9 0 15.7 C-6.1 7.9 -6.1 -7.9 0 -15.7Z" fill="#415e39"/><path transform="translate(532.1 103.8) rotate(31)" d="M0 -21.4 C9.3 -10.7 9.3 10.7 0 21.4 C-9.3 10.7 -9.3 -10.7 0 -21.4Z" fill="#3c5735"/><path transform="translate(297.3 30.3) rotate(176)" d="M0 -11.8 C10.0 -5.9 10.0 5.9 0 11.8 C-10.0 5.9 -10.0 -5.9 0 -11.8Z" fill="#4e7043"/><path transform="translate(444.7 90.1) rotate(175)" d="M0 -11.6 C5.1 -5.8 5.1 5.8 0 11.6 C-5.1 5.8 -5.1 -5.8 0 -11.6Z" fill="#43603a"/><path transform="translate(442.6 143.0) rotate(149)" d="M0 -15.2 C10.2 -7.6 10.2 7.6 0 15.2 C-10.2 7.6 -10.2 -7.6 0 -15.2Z" fill="#49693f"/><path transform="translate(320.7 60.6) rotate(47)" d="M0 -12.9 C8.5 -6.4 8.5 6.4 0 12.9 C-8.5 6.4 -8.5 -6.4 0 -12.9Z" fill="#45633c"/><path transform="translate(378.5 24.3) rotate(105)" d="M0 -14.2 C7.7 -7.1 7.7 7.1 0 14.2 C-7.7 7.1 -7.7 -7.1 0 -14.2Z" fill="#537646"/><path transform="translate(513.4 111.2) rotate(94)" d="M0 -16.0 C8.2 -8.0 8.2 8.0 0 16.0 C-8.2 8.0 -8.2 -8.0 0 -16.0Z" fill="#537746"/><path transform="translate(267.2 117.0) rotate(31)" d="M0 -10.0 C9.8 -5.0 9.8 5.0 0 10.0 C-9.8 5.0 -9.8 -5.0 0 -10.0Z" fill="#405c38"/><path transform="translate(393.6 202.6) rotate(100)" d="M0 -13.9 C8.1 -7.0 8.1 7.0 0 13.9 C-8.1 7.0 -8.1 -7.0 0 -13.9Z" fill="#43603a"/><path transform="translate(480.0 16.8) rotate(139)" d="M0 -13.0 C6.7 -6.5 6.7 6.5 0 13.0 C-6.7 6.5 -6.7 -6.5 0 -13.0Z" fill="#43613a"/><path transform="translate(403.1 153.5) rotate(110)" d="M0 -20.9 C7.7 -10.5 7.7 10.5 0 20.9 C-7.7 10.5 -7.7 -10.5 0 -20.9Z" fill="#4c6d41"/><path transform="translate(402.5 138.6) rotate(86)" d="M0 -15.4 C8.2 -7.7 8.2 7.7 0 15.4 C-8.2 7.7 -8.2 -7.7 0 -15.4Z" fill="#49693f"/><path transform="translate(523.7 194.8) rotate(101)" d="M0 -21.3 C6.6 -10.7 6.6 10.7 0 21.3 C-6.6 10.7 -6.6 -10.7 0 -21.3Z" fill="#47653d"/><path transform="translate(524.2 237.0) rotate(13)" d="M0 -11.5 C7.7 -5.7 7.7 5.7 0 11.5 C-7.7 5.7 -7.7 -5.7 0 -11.5Z" fill="#233423"/><path transform="translate(479.9 254.1) rotate(26)" d="M0 -18.6 C9.0 -9.3 9.0 9.3 0 18.6 C-9.0 9.3 -9.0 -9.3 0 -18.6Z" fill="#233523"/><path transform="translate(507.4 275.3) rotate(88)" d="M0 -21.4 C7.4 -10.7 7.4 10.7 0 21.4 C-7.4 10.7 -7.4 -10.7 0 -21.4Z" fill="#263925"/><path transform="translate(537.2 234.7) rotate(61)" d="M0 -15.2 C8.1 -7.6 8.1 7.6 0 15.2 C-8.1 7.6 -8.1 -7.6 0 -15.2Z" fill="#243623"/><path transform="translate(316.4 80.6) rotate(79)" d="M0 -10.2 C8.3 -5.1 8.3 5.1 0 10.2 C-8.3 5.1 -8.3 -5.1 0 -10.2Z" fill="#587d4a"/><path transform="translate(267.0 84.4) rotate(177)" d="M0 -16.1 C5.4 -8.1 5.4 8.1 0 16.1 C-5.4 8.1 -5.4 -8.1 0 -16.1Z" fill="#547746"/><path transform="translate(481.2 276.5) rotate(140)" d="M0 -13.2 C5.2 -6.6 5.2 6.6 0 13.2 C-5.2 6.6 -5.2 -6.6 0 -13.2Z" fill="#213222"/><path transform="translate(515.4 230.7) rotate(103)" d="M0 -11.8 C10.5 -5.9 10.5 5.9 0 11.8 C-10.5 5.9 -10.5 -5.9 0 -11.8Z" fill="#283c27"/><path transform="translate(456.7 11.8) rotate(13)" d="M0 -18.3 C7.6 -9.1 7.6 9.1 0 18.3 C-7.6 9.1 -7.6 -9.1 0 -18.3Z" fill="#2d422a"/><path transform="translate(522.9 175.3) rotate(12)" d="M0 -11.0 C10.1 -5.5 10.1 5.5 0 11.0 C-10.1 5.5 -10.1 -5.5 0 -11.0Z" fill="#43613b"/><path transform="translate(501.9 121.1) rotate(48)" d="M0 -16.6 C10.6 -8.3 10.6 8.3 0 16.6 C-10.6 8.3 -10.6 -8.3 0 -16.6Z" fill="#2e442b"/><path transform="translate(297.9 143.1) rotate(9)" d="M0 -11.3 C6.0 -5.7 6.0 5.7 0 11.3 C-6.0 5.7 -6.0 -5.7 0 -11.3Z" fill="#425f3a"/><path transform="translate(318.1 78.6) rotate(90)" d="M0 -19.1 C6.7 -9.6 6.7 9.6 0 19.1 C-6.7 9.6 -6.7 -9.6 0 -19.1Z" fill="#45633c"/><path transform="translate(311.5 89.1) rotate(132)" d="M0 -13.0 C5.1 -6.5 5.1 6.5 0 13.0 C-5.1 6.5 -5.1 -6.5 0 -13.0Z" fill="#385232"/><path transform="translate(415.2 41.8) rotate(147)" d="M0 -21.2 C5.6 -10.6 5.6 10.6 0 21.2 C-5.6 10.6 -5.6 -10.6 0 -21.2Z" fill="#3f5b38"/><path transform="translate(382.1 133.5) rotate(124)" d="M0 -14.7 C8.0 -7.4 8.0 7.4 0 14.7 C-8.0 7.4 -8.0 -7.4 0 -14.7Z" fill="#507244"/><path transform="translate(535.1 87.8) rotate(73)" d="M0 -18.5 C8.8 -9.2 8.8 9.2 0 18.5 C-8.8 9.2 -8.8 -9.2 0 -18.5Z" fill="#4f7143"/><path transform="translate(358.6 1.3) rotate(46)" d="M0 -10.8 C9.4 -5.4 9.4 5.4 0 10.8 C-9.4 5.4 -9.4 -5.4 0 -10.8Z" fill="#30462c"/><path transform="translate(307.4 10.3) rotate(44)" d="M0 -18.0 C6.7 -9.0 6.7 9.0 0 18.0 C-6.7 9.0 -6.7 -9.0 0 -18.0Z" fill="#517445"/><path transform="translate(343.5 122.8) rotate(173)" d="M0 -15.3 C6.6 -7.7 6.6 7.7 0 15.3 C-6.6 7.7 -6.6 -7.7 0 -15.3Z" fill="#3f5a37"/><path transform="translate(532.4 149.1) rotate(64)" d="M0 -21.6 C6.9 -10.8 6.9 10.8 0 21.6 C-6.9 10.8 -6.9 -10.8 0 -21.6Z" fill="#2a3f28"/><path transform="translate(262.3 99.5) rotate(91)" d="M0 -16.0 C6.2 -8.0 6.2 8.0 0 16.0 C-6.2 8.0 -6.2 -8.0 0 -16.0Z" fill="#4d6e42"/><path transform="translate(263.4 64.3) rotate(4)" d="M0 -14.8 C5.3 -7.4 5.3 7.4 0 14.8 C-5.3 7.4 -5.3 -7.4 0 -14.8Z" fill="#3c5635"/><path transform="translate(346.6 54.8) rotate(118)" d="M0 -16.4 C9.5 -8.2 9.5 8.2 0 16.4 C-9.5 8.2 -9.5 -8.2 0 -16.4Z" fill="#527545"/><path transform="translate(461.0 248.7) rotate(27)" d="M0 -13.9 C10.9 -7.0 10.9 7.0 0 13.9 C-10.9 7.0 -10.9 -7.0 0 -13.9Z" fill="#2e442b"/><path transform="translate(463.3 178.0) rotate(113)" d="M0 -20.0 C10.4 -10.0 10.4 10.0 0 20.0 C-10.4 10.0 -10.4 -10.0 0 -20.0Z" fill="#213222"/><path transform="translate(466.0 228.7) rotate(150)" d="M0 -16.3 C8.0 -8.1 8.0 8.1 0 16.3 C-8.0 8.1 -8.0 -8.1 0 -16.3Z" fill="#253825"/><path transform="translate(485.7 232.9) rotate(125)" d="M0 -20.7 C9.1 -10.4 9.1 10.4 0 20.7 C-9.1 10.4 -9.1 -10.4 0 -20.7Z" fill="#375031"/><path transform="translate(362.3 16.5) rotate(113)" d="M0 -16.7 C8.8 -8.4 8.8 8.4 0 16.7 C-8.8 8.4 -8.8 -8.4 0 -16.7Z" fill="#507244"/><path transform="translate(451.2 131.8) rotate(91)" d="M0 -19.6 C9.5 -9.8 9.5 9.8 0 19.6 C-9.5 9.8 -9.5 -9.8 0 -19.6Z" fill="#1f3020"/><path transform="translate(410.8 182.8) rotate(13)" d="M0 -18.8 C6.5 -9.4 6.5 9.4 0 18.8 C-6.5 9.4 -6.5 -9.4 0 -18.8Z" fill="#2d422a"/><path transform="translate(533.3 133.2) rotate(138)" d="M0 -15.7 C9.1 -7.9 9.1 7.9 0 15.7 C-9.1 7.9 -9.1 -7.9 0 -15.7Z" fill="#30472d"/><path transform="translate(433.5 177.8) rotate(134)" d="M0 -11.8 C6.5 -5.9 6.5 5.9 0 11.8 C-6.5 5.9 -6.5 -5.9 0 -11.8Z" fill="#233423"/><path transform="translate(346.6 155.3) rotate(121)" d="M0 -10.7 C6.6 -5.4 6.6 5.4 0 10.7 C-6.6 5.4 -6.6 -5.4 0 -10.7Z" fill="#385132"/><path transform="translate(454.4 187.7) rotate(84)" d="M0 -16.2 C7.8 -8.1 7.8 8.1 0 16.2 C-7.8 8.1 -7.8 -8.1 0 -16.2Z" fill="#2c412a"/><path transform="translate(522.3 -9.7) rotate(81)" d="M0 -19.8 C10.8 -9.9 10.8 9.9 0 19.8 C-10.8 9.9 -10.8 -9.9 0 -19.8Z" fill="#5a7f4b"/><path transform="translate(336.7 48.0) rotate(26)" d="M0 -12.5 C8.5 -6.3 8.5 6.3 0 12.5 C-8.5 6.3 -8.5 -6.3 0 -12.5Z" fill="#628b51"/><path transform="translate(457.5 54.4) rotate(1)" d="M0 -15.8 C5.1 -7.9 5.1 7.9 0 15.8 C-5.1 7.9 -5.1 -7.9 0 -15.8Z" fill="#527546"/><path transform="translate(398.7 120.2) rotate(57)" d="M0 -11.7 C7.1 -5.8 7.1 5.8 0 11.7 C-7.1 5.8 -7.1 -5.8 0 -11.7Z" fill="#213221"/><path transform="translate(495.6 -14.5) rotate(167)" d="M0 -20.1 C5.7 -10.0 5.7 10.0 0 20.1 C-5.7 10.0 -5.7 -10.0 0 -20.1Z" fill="#679155"/><path transform="translate(460.2 255.5) rotate(180)" d="M0 -14.5 C7.4 -7.2 7.4 7.2 0 14.5 C-7.4 7.2 -7.4 -7.2 0 -14.5Z" fill="#2a3e28"/><path transform="translate(425.8 93.2) rotate(18)" d="M0 -13.3 C5.3 -6.7 5.3 6.7 0 13.3 C-5.3 6.7 -5.3 -6.7 0 -13.3Z" fill="#273a26"/><path transform="translate(494.0 70.7) rotate(92)" d="M0 -13.0 C6.6 -6.5 6.6 6.5 0 13.0 C-6.6 6.5 -6.6 -6.5 0 -13.0Z" fill="#547847"/><path transform="translate(314.8 97.0) rotate(114)" d="M0 -20.6 C9.9 -10.3 9.9 10.3 0 20.6 C-9.9 10.3 -9.9 -10.3 0 -20.6Z" fill="#638c51"/><path transform="translate(515.9 267.2) rotate(132)" d="M0 -18.6 C5.3 -9.3 5.3 9.3 0 18.6 C-5.3 9.3 -5.3 -9.3 0 -18.6Z" fill="#354e30"/><path transform="translate(387.3 210.8) rotate(167)" d="M0 -13.4 C5.3 -6.7 5.3 6.7 0 13.4 C-5.3 6.7 -5.3 -6.7 0 -13.4Z" fill="#47663d"/><path transform="translate(297.4 126.7) rotate(176)" d="M0 -13.6 C9.4 -6.8 9.4 6.8 0 13.6 C-9.4 6.8 -9.4 -6.8 0 -13.6Z" fill="#47663d"/><path transform="translate(345.6 152.2) rotate(37)" d="M0 -12.0 C6.0 -6.0 6.0 6.0 0 12.0 C-6.0 6.0 -6.0 -6.0 0 -12.0Z" fill="#49693f"/><path transform="translate(513.9 134.1) rotate(81)" d="M0 -20.9 C11.0 -10.4 11.0 10.4 0 20.9 C-11.0 10.4 -11.0 -10.4 0 -20.9Z" fill="#293d27"/><path transform="translate(357.1 12.3) rotate(160)" d="M0 -13.1 C8.4 -6.6 8.4 6.6 0 13.1 C-8.4 6.6 -8.4 -6.6 0 -13.1Z" fill="#354d30"/><path transform="translate(470.4 108.8) rotate(61)" d="M0 -16.3 C7.3 -8.1 7.3 8.1 0 16.3 C-7.3 8.1 -7.3 -8.1 0 -16.3Z" fill="#3d5836"/><path transform="translate(279.3 68.3) rotate(113)" d="M0 -11.5 C8.0 -5.8 8.0 5.8 0 11.5 C-8.0 5.8 -8.0 -5.8 0 -11.5Z" fill="#638c52"/><path transform="translate(501.9 49.8) rotate(80)" d="M0 -13.0 C7.4 -6.5 7.4 6.5 0 13.0 C-7.4 6.5 -7.4 -6.5 0 -13.0Z" fill="#364f31"/><path transform="translate(527.2 239.6) rotate(128)" d="M0 -10.3 C5.2 -5.1 5.2 5.1 0 10.3 C-5.2 5.1 -5.2 -5.1 0 -10.3Z" fill="#44613b"/><path transform="translate(511.0 127.0) rotate(167)" d="M0 -10.0 C7.3 -5.0 7.3 5.0 0 10.0 C-7.3 5.0 -7.3 -5.0 0 -10.0Z" fill="#3a5433"/><path transform="translate(491.5 241.6) rotate(28)" d="M0 -13.0 C5.7 -6.5 5.7 6.5 0 13.0 C-5.7 6.5 -5.7 -6.5 0 -13.0Z" fill="#48683e"/><path transform="translate(407.2 189.6) rotate(138)" d="M0 -18.7 C8.9 -9.3 8.9 9.3 0 18.7 C-8.9 9.3 -8.9 -9.3 0 -18.7Z" fill="#547847"/><path transform="translate(389.1 150.5) rotate(166)" d="M0 -19.4 C6.4 -9.7 6.4 9.7 0 19.4 C-6.4 9.7 -6.4 -9.7 0 -19.4Z" fill="#2c4129"/><path transform="translate(441.5 76.1) rotate(126)" d="M0 -13.0 C8.8 -6.5 8.8 6.5 0 13.0 C-8.8 6.5 -8.8 -6.5 0 -13.0Z" fill="#30462c"/><path transform="translate(424.0 101.4) rotate(54)" d="M0 -17.2 C5.1 -8.6 5.1 8.6 0 17.2 C-5.1 8.6 -5.1 -8.6 0 -17.2Z" fill="#1e2d1f"/><path transform="translate(441.2 250.1) rotate(173)" d="M0 -12.8 C6.5 -6.4 6.5 6.4 0 12.8 C-6.5 6.4 -6.5 -6.4 0 -12.8Z" fill="#32492e"/><path transform="translate(457.9 77.2) rotate(76)" d="M0 -16.0 C9.0 -8.0 9.0 8.0 0 16.0 C-9.0 8.0 -9.0 -8.0 0 -16.0Z" fill="#2b4029"/><path transform="translate(519.2 53.0) rotate(123)" d="M0 -14.1 C7.5 -7.0 7.5 7.0 0 14.1 C-7.5 7.0 -7.5 -7.0 0 -14.1Z" fill="#2c4029"/><path transform="translate(467.5 136.5) rotate(148)" d="M0 -21.6 C6.9 -10.8 6.9 10.8 0 21.6 C-6.9 10.8 -6.9 -10.8 0 -21.6Z" fill="#283c27"/><path transform="translate(326.2 51.4) rotate(89)" d="M0 -13.5 C10.7 -6.8 10.7 6.8 0 13.5 C-10.7 6.8 -10.7 -6.8 0 -13.5Z" fill="#5a7f4b"/><path transform="translate(314.1 52.0) rotate(26)" d="M0 -18.0 C10.7 -9.0 10.7 9.0 0 18.0 C-10.7 9.0 -10.7 -9.0 0 -18.0Z" fill="#4a6a40"/><path transform="translate(371.4 48.9) rotate(11)" d="M0 -11.7 C5.3 -5.9 5.3 5.9 0 11.7 C-5.3 5.9 -5.3 -5.9 0 -11.7Z" fill="#567a48"/><path transform="translate(507.6 204.8) rotate(33)" d="M0 -21.2 C7.0 -10.6 7.0 10.6 0 21.2 C-7.0 10.6 -7.0 -10.6 0 -21.2Z" fill="#4c6d41"/><path transform="translate(522.2 208.9) rotate(67)" d="M0 -18.0 C7.3 -9.0 7.3 9.0 0 18.0 C-7.3 9.0 -7.3 -9.0 0 -18.0Z" fill="#213121"/><path transform="translate(354.2 35.8) rotate(172)" d="M0 -13.4 C7.1 -6.7 7.1 6.7 0 13.4 C-7.1 6.7 -7.1 -6.7 0 -13.4Z" fill="#2a3e28"/><path transform="translate(319.7 92.0) rotate(9)" d="M0 -19.9 C7.6 -9.9 7.6 9.9 0 19.9 C-7.6 9.9 -7.6 -9.9 0 -19.9Z" fill="#5c834d"/><path transform="translate(393.6 96.8) rotate(161)" d="M0 -12.3 C7.2 -6.2 7.2 6.2 0 12.3 C-7.2 6.2 -7.2 -6.2 0 -12.3Z" fill="#537746"/><path transform="translate(270.4 108.2) rotate(6)" d="M0 -19.2 C5.2 -9.6 5.2 9.6 0 19.2 C-5.2 9.6 -5.2 -9.6 0 -19.2Z" fill="#5c834d"/><path transform="translate(511.8 86.7) rotate(47)" d="M0 -21.5 C8.7 -10.7 8.7 10.7 0 21.5 C-8.7 10.7 -8.7 -10.7 0 -21.5Z" fill="#364f31"/><path transform="translate(461.2 79.9) rotate(165)" d="M0 -10.0 C9.5 -5.0 9.5 5.0 0 10.0 C-9.5 5.0 -9.5 -5.0 0 -10.0Z" fill="#364f31"/><path transform="translate(268.7 55.2) rotate(70)" d="M0 -21.5 C10.7 -10.7 10.7 10.7 0 21.5 C-10.7 10.7 -10.7 -10.7 0 -21.5Z" fill="#4d6e42"/><path transform="translate(331.8 114.0) rotate(144)" d="M0 -21.1 C6.1 -10.6 6.1 10.6 0 21.1 C-6.1 10.6 -6.1 -10.6 0 -21.1Z" fill="#4e6f42"/><path transform="translate(467.3 231.8) rotate(58)" d="M0 -17.3 C7.0 -8.6 7.0 8.6 0 17.3 C-7.0 8.6 -7.0 -8.6 0 -17.3Z" fill="#3f5b38"/><path transform="translate(284.0 44.2) rotate(99)" d="M0 -10.8 C5.2 -5.4 5.2 5.4 0 10.8 C-5.2 5.4 -5.2 -5.4 0 -10.8Z" fill="#43603a"/><path transform="translate(507.6 281.3) rotate(90)" d="M0 -11.0 C5.6 -5.5 5.6 5.5 0 11.0 C-5.6 5.5 -5.6 -5.5 0 -11.0Z" fill="#283c27"/><path transform="translate(459.3 119.1) rotate(121)" d="M0 -15.0 C8.7 -7.5 8.7 7.5 0 15.0 C-8.7 7.5 -8.7 -7.5 0 -15.0Z" fill="#354d30"/><path transform="translate(469.9 239.1) rotate(53)" d="M0 -11.5 C10.0 -5.7 10.0 5.7 0 11.5 C-10.0 5.7 -10.0 -5.7 0 -11.5Z" fill="#3a5534"/><path transform="translate(419.6 96.9) rotate(44)" d="M0 -12.4 C6.5 -6.2 6.5 6.2 0 12.4 C-6.5 6.2 -6.5 -6.2 0 -12.4Z" fill="#354d30"/><path transform="translate(422.8 82.9) rotate(42)" d="M0 -21.9 C8.0 -11.0 8.0 11.0 0 21.9 C-8.0 11.0 -8.0 -11.0 0 -21.9Z" fill="#253825"/><path transform="translate(486.7 181.0) rotate(147)" d="M0 -11.2 C7.8 -5.6 7.8 5.6 0 11.2 C-7.8 5.6 -7.8 -5.6 0 -11.2Z" fill="#4c6c41"/><path transform="translate(495.7 259.3) rotate(34)" d="M0 -13.5 C5.7 -6.8 5.7 6.8 0 13.5 C-5.7 6.8 -5.7 -6.8 0 -13.5Z" fill="#1e2e1f"/><path transform="translate(532.5 160.0) rotate(81)" d="M0 -14.5 C10.2 -7.2 10.2 7.2 0 14.5 C-10.2 7.2 -10.2 -7.2 0 -14.5Z" fill="#49693f"/><path transform="translate(524.9 16.7) rotate(66)" d="M0 -17.4 C6.3 -8.7 6.3 8.7 0 17.4 C-6.3 8.7 -6.3 -8.7 0 -17.4Z" fill="#60884f"/><path transform="translate(301.3 46.2) rotate(37)" d="M0 -17.2 C8.9 -8.6 8.9 8.6 0 17.2 C-8.9 8.6 -8.9 -8.6 0 -17.2Z" fill="#43603a"/><path transform="translate(265.2 83.2) rotate(37)" d="M0 -12.2 C6.9 -6.1 6.9 6.1 0 12.2 C-6.9 6.1 -6.9 -6.1 0 -12.2Z" fill="#567a48"/><path transform="translate(483.1 149.4) rotate(99)" d="M0 -11.2 C7.4 -5.6 7.4 5.6 0 11.2 C-7.4 5.6 -7.4 -5.6 0 -11.2Z" fill="#223322"/><path transform="translate(439.7 12.3) rotate(51)" d="M0 -18.3 C7.5 -9.2 7.5 9.2 0 18.3 C-7.5 9.2 -7.5 -9.2 0 -18.3Z" fill="#31482d"/></g>
<!-- ground -->
<g filter="url(#b2)">
  <path d="M-20 168 Q50 166 90 172 Q120 176 140 178 L140 370 H-20 Z" fill="#a29585"/>
  <ellipse cx="30" cy="235" rx="40" ry="20" fill="#978a7b"/>
  <ellipse cx="80" cy="200" rx="30" ry="15" fill="#a89a8a"/>
  <path d="M-20 278 Q40 268 90 280 L200 290 L560 270 V370 H-20 Z" fill="#6e6256"/>
  <ellipse cx="70" cy="308" rx="22" ry="20" fill="#867a6e"/>
  <ellipse cx="20" cy="320" rx="25" ry="25" fill="#756a5e"/>
  <ellipse cx="68" cy="278" rx="18" ry="12" fill="#4a3d35"/>
  <ellipse cx="160" cy="320" rx="30" ry="30" fill="#5a4c42"/>
</g>

<!-- TIGER base silhouette (white fur) -->
<g filter="url(#b3)">
  <path d="M133 68 C128 50 130 30 143 29 C156 30 166 40 172 46 C185 40 200 38 207 38 C220 38 232 40 240 46 C248 38 258 32 268 32 C280 34 280 52 276 70 C285 90 290 120 292 155 C300 160 320 166 368 168 C392 175 420 200 437 233 C446 252 460 268 484 280 L470 292 L312 294 L241 298 C238 322 230 340 205 341 C185 341 175 325 177 300 L150 296 C150 320 146 338 125 343 C105 345 92 335 90 310 L84 265 C82 240 90 215 118 182 C120 140 126 100 133 68 Z" fill="#d8d5cf"/>
  <!-- ears -->
  <path d="M133 68 C128 50 130 30 143 29 C156 30 166 40 172 50 L160 74 Z" fill="#3a3431"/>
  <path d="M137 62 C134 47 137 37 144 36 C153 37 160 45 165 52 L156 68 Z" fill="#8c8682"/>
  <path d="M276 70 C280 52 280 34 268 32 C258 32 248 38 240 48 L252 74 Z" fill="#3a3431"/>
  <path d="M272 64 C275 48 273 40 266 39 C258 40 251 46 246 52 L255 68 Z" fill="#8c8682"/>
</g>
<g filter="url(#b2)">
  <!-- chest soft grey -->
  <ellipse cx="207" cy="186" rx="52" ry="22" fill="#b3b0ab"/>
  <ellipse cx="136" cy="145" rx="14" ry="36" fill="#b8b5af"/>
  <ellipse cx="282" cy="145" rx="14" ry="36" fill="#b8b5af"/>
  <ellipse cx="165" cy="165" rx="22" ry="10" fill="#a8a59f"/>
  <ellipse cx="253" cy="165" rx="22" ry="10" fill="#a8a59f"/>
  <ellipse cx="120" cy="165" rx="6" ry="18" fill="#b9b6b0"/>
  <ellipse cx="294" cy="165" rx="6" ry="18" fill="#b9b6b0"/>
  <ellipse cx="209" cy="235" rx="30" ry="20" fill="#e2dfda"/>
</g>
<g filter="url(#b3)">
  <!-- orange head -->
  <path d="M146 62 C165 44 190 38 207 38 C228 38 250 44 268 62 C274 70 277 80 276 90 L256 92 L236 84 L182 84 L160 92 L140 90 C139 80 142 70 146 62 Z" fill="#c4874b"/>
  <!-- under-eye cheeks + nose bridge -->
  <path d="M182 70 L236 70 C240 84 246 94 256 98 C258 112 256 126 250 134 L228 138 L190 138 L166 134 C160 126 158 112 162 98 C172 94 178 84 182 70 Z" fill="#c28549"/>
  <!-- white eyebrow patches -->
  <path d="M168 80 C170 68 182 60 192 64 C196 72 194 82 188 86 C180 88 170 88 168 80 Z" fill="#eceae6"/>
  <path d="M248 80 C246 68 234 60 224 64 C220 72 222 82 228 86 C236 88 246 88 248 80 Z" fill="#eceae6"/>
  <!-- white under-eye rims -->
  <ellipse cx="180" cy="95" rx="9" ry="3.5" fill="#e6e2da"/>
  <ellipse cx="234" cy="95.5" rx="9" ry="3.5" fill="#e6e2da"/>
  <!-- muzzle white -->
  <path d="M180 140 C190 130 228 130 238 140 C250 152 246 166 209 168 C172 166 168 152 180 140 Z" fill="#e9e7e3"/>
  <!-- body orange -->
  <path d="M276 150 C300 160 320 166 368 168 C392 175 420 200 437 233 C446 252 460 268 484 280 L470 292 L440 292 C450 260 430 225 400 215 C370 205 330 220 305 232 L300 292 L262 296 L268 220 Z" fill="#c28548"/>
  <ellipse cx="350" cy="198" rx="30" ry="28" fill="#c98b50"/>
  <!-- left shoulder orange -->
  <path d="M119 178 C104 192 90 214 86 236 L100 222 C112 214 124 200 130 188 Z" fill="#c08548"/>
  <!-- left leg orange -->
  <path d="M92 232 C106 228 120 236 128 250 L146 300 C150 322 146 338 125 343 C105 345 92 335 90 310 L84 265 C83 248 85 238 92 232 Z" fill="#c08a56"/>
  <ellipse cx="120" cy="328" rx="22" ry="15" fill="#dccdb8"/>
  <!-- right leg orange -->
  <path d="M185 272 C210 258 250 246 302 232 L312 292 L241 298 C238 322 230 340 205 341 C185 341 175 325 177 300 Z" fill="#c28a54"/>
  <ellipse cx="207" cy="322" rx="26" ry="17" fill="#d8c8b2"/>
</g>
<g filter="url(#b4)">
  <!-- nose & eyes -->
  <path d="M198 134 L220 134 C221 138 214 144 209 147 C204 144 197 138 198 134 Z" fill="#c98b7c"/>
  <path d="M195 133 C199 143 205 148 209 151 C213 148 219 143 223 133" fill="none" stroke="#2a2220" stroke-width="2.2"/>
  <path d="M209 151 L209 158 M196 160 C203 156 215 156 222 160" fill="none" stroke="#2a2220" stroke-width="2"/>
  <ellipse cx="180.5" cy="91" rx="6" ry="4.5" fill="#cfc08a" stroke="#2a2420" stroke-width="1.6"/>
  <ellipse cx="233.5" cy="91.5" rx="6" ry="4.5" fill="#cfc08a" stroke="#2a2420" stroke-width="1.6"/>
  <!-- head stripes -->
  <g fill="none" stroke="#1f1b19" stroke-linecap="round">
    <path d="M184 52 C192 48 200 48 204 52" stroke-width="3"/>
    <path d="M214 52 C220 48 228 48 236 54" stroke-width="3"/>
    <path d="M190 58 L202 57" stroke-width="2.5"/>
    <path d="M216 57 L228 59" stroke-width="2.5"/>
    <path d="M208 50 L209 64" stroke-width="2"/>
    <path d="M200 62 L206 74 M218 62 L212 74" stroke-width="2"/>
    <path d="M170 60 L160 72" stroke-width="3"/>
    <path d="M246 60 L256 72" stroke-width="3"/>
    <path d="M172 72 L180 68 M244 72 L236 68" stroke-width="2.5"/>
    <path d="M146 80 C140 100 142 124 158 140" stroke-width="5"/>
    <path d="M270 80 C276 100 274 124 258 140" stroke-width="5"/>
    <path d="M156 88 C152 102 154 116 164 126" stroke-width="3.5"/>
    <path d="M260 90 C264 102 262 116 252 126" stroke-width="3.5"/>
    <path d="M166 100 L178 106 M250 100 L238 106" stroke-width="2.5"/>
    <path d="M170 114 L184 120 M246 114 L232 120" stroke-width="2.2"/>
    <path d="M174 126 L186 130 M242 126 L230 130" stroke-width="2"/>
    <path d="M138 132 C150 150 166 160 188 166" stroke-width="3"/>
    <path d="M278 132 C266 150 250 160 228 166" stroke-width="3"/>
    <path d="M185 142 L195 148 M233 142 L223 148" stroke-width="2"/>
    <path d="M280 150 C284 160 288 165 290 170" stroke-width="3"/>
  </g>
</g>
<g filter="url(#b2)" opacity="0.7">
  <path d="M305 234 C330 222 370 207 400 217 C430 227 450 262 440 292" fill="none" stroke="#c28548" stroke-width="7"/>
  <path d="M312 270 C340 262 380 262 420 275" fill="none" stroke="#a8a59f" stroke-width="10" opacity="0.6"/>
</g>
<g filter="url(#b4)"><path d="M327.3 179.5 L328.9 179.5 L331.1 179.4 L333.6 179.2 L336.3 178.9 L339.1 178.7 L341.7 178.7 L344.1 179.0 L345.9 179.5 L347.5 180.3 L349.0 181.3 L350.5 182.6 L352.0 184.0 L353.3 185.5 L354.6 187.2 L355.8 189.0 L356.9 190.9 L357.9 192.7 L358.7 194.6 L359.7 196.5 L360.7 198.6 L361.6 200.9 L362.6 203.4 L363.6 206.1 L364.6 208.9 L365.7 212.1 L366.8 215.6 L367.9 219.4 L369.0 223.3 L370.1 227.2 L371.2 231.0 L372.4 234.5 L373.5 237.5 L374.8 240.2 L376.0 242.7 L377.4 244.9 L378.7 246.9 L379.9 248.6 L381.1 250.0 L382.1 251.2 L382.8 252.2 L383.4 251.8 L382.9 250.7 L382.4 249.2 L381.6 247.5 L380.8 245.7 L379.9 243.6 L379.0 241.3 L378.1 238.9 L377.3 236.3 L376.5 233.3 L375.7 229.8 L374.9 226.1 L374.1 222.1 L373.3 218.1 L372.4 214.1 L371.6 210.4 L370.8 207.1 L370.0 204.1 L369.2 201.3 L368.5 198.6 L367.7 196.0 L366.9 193.5 L365.9 191.1 L364.6 188.8 L363.1 186.7 L361.4 184.8 L359.7 182.9 L357.9 181.1 L356.0 179.5 L353.9 178.0 L351.8 176.8 L349.5 175.8 L347.1 175.1 L344.4 174.9 L341.6 175.0 L338.7 175.5 L335.8 176.2 L333.1 176.9 L330.7 177.7 L328.7 178.4 L327.3 178.9Z" fill="#221c19"/><path d="M367.5 171.7 L368.5 173.6 L369.8 176.2 L371.6 179.1 L373.5 182.4 L375.5 185.9 L377.6 189.3 L379.5 192.7 L381.1 195.8 L382.6 198.7 L384.1 201.7 L385.5 204.6 L386.8 207.5 L388.1 210.3 L389.2 213.2 L390.4 215.9 L391.5 218.7 L392.5 221.6 L393.4 224.7 L394.3 227.9 L395.0 231.1 L395.6 234.2 L396.0 237.3 L396.3 240.1 L396.5 242.6 L396.4 244.8 L396.0 247.1 L395.4 249.3 L394.7 251.4 L394.0 253.3 L393.3 255.1 L392.8 256.7 L392.4 257.9 L393.0 258.1 L393.6 257.1 L394.6 255.8 L395.8 254.3 L397.0 252.4 L398.1 250.4 L399.2 248.0 L400.0 245.5 L400.5 242.8 L400.7 240.0 L400.7 236.9 L400.6 233.7 L400.3 230.3 L399.8 226.8 L399.2 223.4 L398.5 220.0 L397.7 216.7 L396.7 213.5 L395.5 210.4 L393.9 207.5 L392.3 204.6 L390.6 201.8 L388.8 199.0 L387.0 196.2 L385.1 193.4 L383.0 190.4 L380.8 187.2 L378.3 184.0 L375.9 180.8 L373.5 177.8 L371.3 175.1 L369.4 173.0 L367.9 171.3Z" fill="#221c19"/><path d="M392.4 188.9 L392.6 190.4 L392.8 192.3 L393.1 194.6 L393.5 197.2 L394.1 200.0 L394.7 202.9 L395.5 205.9 L396.3 208.9 L397.4 211.9 L398.7 215.0 L400.2 218.2 L401.6 221.4 L403.1 224.7 L404.4 227.9 L405.7 230.9 L406.9 234.0 L407.9 237.2 L408.8 240.7 L409.7 244.3 L410.4 247.9 L411.0 251.4 L411.5 254.7 L411.7 257.5 L411.8 259.7 L411.6 261.3 L411.2 262.6 L410.5 263.7 L409.5 264.7 L408.5 265.5 L407.5 266.3 L406.6 267.1 L406.0 267.8 L406.4 268.2 L407.1 267.9 L408.2 267.7 L409.5 267.3 L410.9 266.7 L412.4 265.8 L413.9 264.5 L415.1 262.6 L415.8 260.3 L416.1 257.5 L416.2 254.4 L416.1 250.9 L415.7 247.2 L415.3 243.3 L414.7 239.4 L414.0 235.7 L413.1 232.0 L412.1 228.5 L410.7 225.1 L408.9 221.8 L407.1 218.6 L405.3 215.5 L403.6 212.6 L402.0 209.8 L400.7 207.1 L399.5 204.5 L398.3 201.8 L397.3 199.1 L396.3 196.5 L395.3 194.0 L394.5 191.9 L393.6 190.1 L393.0 188.7Z" fill="#221c19"/><path d="M413.6 208.1 L414.1 209.8 L414.9 211.9 L416.0 214.4 L417.2 217.2 L418.5 220.0 L419.6 222.9 L420.5 225.6 L421.2 228.0 L421.6 230.3 L421.9 232.6 L422.1 234.9 L422.5 237.1 L422.8 239.4 L423.0 241.7 L423.2 244.0 L423.3 246.4 L423.3 248.8 L423.0 251.5 L422.7 254.3 L422.3 257.2 L421.9 259.8 L421.6 262.3 L421.4 264.4 L421.3 265.9 L421.7 266.1 L422.3 264.6 L423.1 262.7 L424.0 260.4 L424.8 257.7 L425.7 255.0 L426.4 252.1 L427.1 249.3 L427.5 246.6 L427.8 244.1 L428.0 241.7 L428.1 239.2 L428.1 236.6 L428.0 234.1 L427.5 231.6 L426.7 229.1 L425.8 226.6 L424.7 223.9 L423.2 221.2 L421.6 218.4 L419.8 215.7 L418.1 213.2 L416.5 211.0 L415.1 209.2 L414.0 207.9Z" fill="#221c19"/><path d="M424.1 242.2 L425.0 242.3 L426.0 242.2 L427.3 242.0 L428.7 241.8 L430.1 241.4 L431.5 241.1 L432.9 240.8 L434.0 240.1 L435.0 239.4 L436.1 238.6 L437.2 237.8 L438.2 237.0 L439.2 236.3 L440.0 235.5 L440.6 234.8 L441.1 234.2 L440.9 233.8 L440.1 233.8 L439.2 233.9 L438.1 234.2 L436.9 234.5 L435.7 234.8 L434.4 235.2 L433.2 235.6 L432.0 235.9 L430.8 236.3 L429.7 237.1 L428.5 237.9 L427.3 238.7 L426.2 239.6 L425.2 240.3 L424.4 241.1 L423.9 241.8Z" fill="#221c19"/><path d="M424.1 258.2 L425.2 258.3 L426.7 258.2 L428.4 257.9 L430.2 257.5 L432.0 257.1 L433.9 256.7 L435.6 256.3 L437.0 255.6 L438.2 254.9 L439.6 254.2 L440.9 253.5 L442.2 252.8 L443.4 252.2 L444.5 251.5 L445.4 250.8 L446.1 250.2 L445.9 249.8 L445.1 249.6 L444.0 249.5 L442.7 249.5 L441.3 249.5 L439.8 249.7 L438.2 249.8 L436.6 250.1 L435.0 250.4 L433.4 250.8 L431.9 251.8 L430.2 252.8 L428.6 253.9 L427.1 254.9 L425.7 255.9 L424.6 256.9 L423.9 257.8Z" fill="#221c19"/><path d="M430.1 272.2 L431.3 272.2 L432.7 271.9 L434.3 271.5 L436.1 270.9 L437.9 270.4 L439.7 269.8 L441.5 269.4 L442.9 268.7 L444.4 267.9 L446.2 267.2 L448.1 266.5 L450.1 265.8 L451.9 265.2 L453.6 264.5 L455.0 263.9 L456.0 263.2 L456.0 262.8 L454.8 262.6 L453.3 262.4 L451.4 262.4 L449.4 262.4 L447.3 262.5 L445.2 262.7 L443.1 263.0 L441.1 263.3 L439.2 263.9 L437.5 265.0 L435.8 266.2 L434.2 267.4 L432.7 268.6 L431.5 269.8 L430.6 270.9 L429.9 271.8Z" fill="#221c19"/><path d="M330.0 168.2 L330.8 168.6 L332.0 169.2 L333.4 169.7 L334.9 170.2 L336.6 170.7 L338.3 171.2 L340.0 171.7 L341.7 171.8 L343.5 171.9 L345.5 172.1 L347.5 172.2 L349.6 172.3 L351.6 172.3 L353.3 172.3 L354.8 172.3 L356.0 172.2 L356.0 171.8 L355.0 171.4 L353.5 170.9 L351.8 170.5 L349.9 170.0 L347.9 169.5 L345.9 169.0 L344.0 168.6 L342.3 168.2 L340.6 167.8 L338.9 167.7 L337.1 167.6 L335.3 167.6 L333.7 167.5 L332.2 167.6 L331.0 167.7 L330.0 167.8Z" fill="#221c19"/><path d="M289.8 166.1 L290.3 167.6 L290.7 169.6 L291.4 172.1 L292.2 174.7 L293.2 177.6 L294.3 180.5 L295.7 183.3 L297.3 185.9 L299.2 188.3 L301.5 190.7 L303.9 192.9 L306.4 195.1 L309.0 197.2 L311.5 199.4 L313.8 201.6 L315.9 203.9 L317.9 206.4 L319.8 209.1 L321.7 211.9 L323.6 214.8 L325.4 217.6 L327.2 220.3 L329.0 222.8 L330.7 225.1 L332.3 227.1 L333.8 228.8 L335.1 230.3 L336.3 231.6 L337.4 232.9 L338.5 234.3 L339.6 235.9 L340.8 237.9 L342.1 240.2 L343.5 242.9 L344.9 245.7 L346.3 248.6 L347.6 251.7 L348.9 254.7 L350.0 257.6 L351.1 260.4 L351.9 263.2 L352.7 266.1 L353.4 269.1 L354.1 272.1 L354.6 274.9 L355.1 277.3 L355.6 279.4 L356.0 281.0 L356.4 281.0 L356.2 279.3 L356.1 277.2 L355.9 274.7 L355.6 271.8 L355.3 268.8 L354.8 265.7 L354.2 262.6 L353.5 259.6 L352.7 256.7 L351.7 253.6 L350.6 250.5 L349.5 247.3 L348.2 244.2 L347.0 241.2 L345.8 238.4 L344.6 235.9 L343.4 233.7 L342.3 231.8 L341.2 230.1 L340.1 228.5 L339.0 227.0 L337.9 225.5 L336.6 223.8 L335.3 221.9 L333.8 219.6 L332.1 217.0 L330.3 214.3 L328.3 211.5 L326.2 208.7 L324.0 205.9 L321.8 203.2 L319.5 200.7 L317.0 198.3 L314.4 196.1 L311.6 194.0 L308.9 192.0 L306.3 190.0 L303.8 188.1 L301.6 186.1 L299.7 184.1 L298.0 181.9 L296.5 179.4 L295.1 176.7 L293.9 174.1 L292.8 171.6 L291.8 169.3 L290.9 167.4 L290.2 165.9Z" fill="#221c19"/><path d="M305.8 222.1 L306.5 224.1 L307.6 226.8 L308.9 230.0 L310.4 233.5 L311.9 237.1 L313.4 240.7 L314.7 244.2 L315.8 247.2 L316.6 250.1 L317.3 252.9 L318.0 255.6 L318.8 258.3 L319.6 260.9 L320.3 263.4 L321.1 265.9 L321.8 268.1 L322.5 270.3 L323.3 272.5 L324.0 274.5 L324.7 276.5 L325.4 278.2 L326.0 279.8 L326.6 281.0 L327.1 282.1 L327.5 281.9 L327.4 280.8 L327.3 279.4 L327.1 277.8 L326.8 275.9 L326.5 273.9 L326.1 271.7 L325.6 269.5 L325.2 267.3 L324.8 264.9 L324.3 262.5 L323.9 259.9 L323.4 257.2 L322.8 254.4 L321.9 251.5 L320.8 248.7 L319.6 245.8 L318.1 242.7 L316.4 239.3 L314.5 235.8 L312.6 232.4 L310.7 229.1 L308.9 226.1 L307.4 223.7 L306.2 221.9Z" fill="#221c19"/><path d="M332.8 240.9 L333.5 242.4 L334.6 244.3 L335.9 246.5 L337.5 248.8 L339.2 251.3 L341.0 253.7 L342.9 256.0 L344.9 257.9 L347.1 259.6 L349.4 261.2 L351.8 262.8 L354.2 264.2 L356.6 265.6 L358.7 266.7 L360.5 267.6 L361.9 268.2 L362.1 267.8 L361.1 266.7 L359.7 265.2 L357.9 263.6 L355.9 261.9 L353.9 260.1 L351.8 258.2 L349.8 256.3 L348.1 254.5 L346.4 252.6 L344.3 250.8 L342.2 248.7 L340.0 246.7 L338.0 244.7 L336.2 243.0 L334.5 241.6 L333.2 240.7Z" fill="#221c19"/><path d="M299.9 163.1 L300.6 164.1 L301.6 165.2 L302.9 166.5 L304.3 167.9 L305.9 169.4 L307.5 170.9 L309.2 172.3 L310.9 173.5 L312.8 174.7 L314.8 175.9 L316.9 177.2 L319.1 178.5 L321.1 179.7 L323.0 180.8 L324.7 181.6 L325.9 182.1 L326.1 181.9 L325.2 180.9 L323.8 179.6 L322.2 178.2 L320.4 176.6 L318.5 175.0 L316.6 173.4 L314.7 171.9 L313.1 170.5 L311.5 169.2 L309.6 168.1 L307.8 166.9 L305.9 165.8 L304.2 164.8 L302.6 163.9 L301.2 163.3 L300.1 162.9Z" fill="#221c19"/><path d="M262.0 234.2 L263.7 234.3 L266.1 234.5 L269.0 234.6 L272.1 234.6 L275.4 234.5 L278.5 234.2 L281.4 233.6 L284.0 232.8 L286.1 231.5 L287.9 230.0 L289.3 228.2 L290.3 226.1 L291.1 224.1 L291.7 222.0 L292.1 220.0 L292.5 218.1 L292.8 216.1 L292.8 213.8 L292.6 211.6 L292.4 209.5 L292.0 207.4 L291.6 205.6 L291.3 204.1 L291.0 203.0 L290.6 203.0 L290.4 204.2 L290.3 205.7 L290.3 207.6 L290.2 209.6 L290.1 211.7 L289.9 213.7 L289.6 215.6 L289.1 217.3 L288.5 219.0 L287.8 220.7 L287.0 222.4 L286.1 224.0 L285.2 225.5 L284.3 226.9 L283.2 228.2 L282.0 229.2 L280.3 230.1 L277.9 230.9 L275.0 231.6 L271.9 232.1 L268.9 232.5 L266.0 232.9 L263.7 233.4 L262.0 233.8Z" fill="#221c19"/><path d="M129.8 110.0 L129.4 111.5 L128.9 113.5 L128.3 115.9 L127.8 118.6 L127.2 121.5 L126.8 124.4 L126.5 127.3 L126.4 130.1 L126.4 132.7 L126.6 135.3 L126.9 138.0 L127.5 140.6 L128.2 143.2 L129.0 145.7 L129.8 148.1 L130.7 150.5 L131.7 152.8 L132.9 155.1 L134.2 157.5 L135.5 159.7 L136.8 161.7 L138.0 163.5 L139.1 165.0 L139.9 166.1 L140.1 165.9 L139.6 164.6 L138.9 163.0 L138.0 161.0 L137.0 158.8 L136.0 156.5 L134.9 154.2 L134.1 151.8 L133.3 149.5 L132.7 147.3 L132.2 144.9 L131.7 142.4 L131.2 139.9 L130.8 137.3 L130.4 134.8 L129.9 132.4 L129.6 129.9 L129.5 127.4 L129.4 124.6 L129.6 121.7 L129.7 118.9 L129.9 116.2 L130.1 113.7 L130.2 111.6 L130.2 110.0Z" fill="#221c19"/><path d="M285.8 110.0 L285.8 111.6 L285.9 113.7 L286.1 116.2 L286.3 118.9 L286.4 121.7 L286.6 124.6 L286.5 127.4 L286.4 129.9 L286.1 132.4 L285.6 134.8 L285.2 137.3 L284.8 139.9 L284.3 142.4 L283.8 144.9 L283.3 147.3 L282.7 149.5 L281.9 151.8 L281.1 154.2 L280.0 156.5 L279.0 158.8 L278.0 161.0 L277.1 163.0 L276.4 164.6 L275.9 165.9 L276.1 166.1 L276.9 165.0 L278.0 163.5 L279.2 161.7 L280.5 159.7 L281.8 157.5 L283.1 155.1 L284.3 152.8 L285.3 150.5 L286.2 148.1 L287.0 145.7 L287.8 143.2 L288.5 140.6 L289.1 138.0 L289.4 135.3 L289.6 132.7 L289.6 130.1 L289.5 127.3 L289.2 124.4 L288.8 121.5 L288.2 118.6 L287.7 115.9 L287.1 113.5 L286.6 111.5 L286.2 110.0Z" fill="#221c19"/><path d="M141.9 160.1 L142.9 161.4 L144.3 162.9 L146.1 164.7 L148.0 166.7 L150.2 168.6 L152.5 170.6 L154.7 172.4 L157.1 173.7 L159.6 174.6 L162.3 175.5 L165.0 176.2 L167.7 176.9 L170.2 177.4 L172.5 177.7 L174.5 178.0 L176.0 178.2 L176.0 177.8 L174.7 177.2 L172.9 176.4 L170.7 175.5 L168.3 174.6 L165.8 173.7 L163.3 172.6 L161.0 171.5 L158.9 170.3 L156.8 169.0 L154.5 167.7 L152.1 166.2 L149.7 164.6 L147.4 163.0 L145.3 161.7 L143.5 160.6 L142.1 159.9Z" fill="#221c19"/><path d="M273.9 159.9 L272.5 160.6 L270.7 161.7 L268.6 163.0 L266.3 164.6 L263.9 166.2 L261.5 167.7 L259.2 169.0 L257.1 170.3 L255.0 171.5 L252.7 172.6 L250.2 173.7 L247.7 174.6 L245.3 175.5 L243.1 176.4 L241.3 177.2 L240.0 177.8 L240.0 178.2 L241.5 178.0 L243.5 177.7 L245.8 177.4 L248.3 176.9 L251.0 176.2 L253.7 175.5 L256.4 174.6 L258.9 173.7 L261.3 172.4 L263.5 170.6 L265.8 168.6 L268.0 166.7 L269.9 164.7 L271.7 162.9 L273.1 161.4 L274.1 160.1Z" fill="#221c19"/><path d="M123.8 156.1 L124.4 157.8 L125.3 160.2 L126.3 162.9 L127.6 165.9 L129.0 169.1 L130.4 172.2 L131.9 175.3 L133.3 178.0 L134.7 180.6 L136.2 183.0 L137.7 185.3 L139.3 187.5 L140.8 189.8 L142.3 192.0 L144.0 194.3 L145.7 196.5 L147.4 199.0 L149.2 201.7 L151.0 204.5 L152.8 207.3 L154.5 210.2 L156.3 212.9 L157.9 215.5 L159.5 217.9 L161.0 220.1 L162.5 222.3 L164.0 224.4 L165.4 226.4 L166.7 228.2 L167.9 229.8 L169.0 231.1 L169.8 232.1 L170.2 231.9 L169.7 230.7 L169.0 229.1 L168.2 227.3 L167.2 225.3 L166.1 223.2 L165.0 220.9 L163.7 218.5 L162.5 216.1 L161.2 213.6 L159.8 210.9 L158.3 208.0 L156.7 205.0 L155.1 202.0 L153.5 199.1 L151.9 196.2 L150.3 193.5 L148.8 190.9 L147.1 188.5 L145.3 186.4 L143.5 184.3 L141.7 182.3 L140.0 180.3 L138.3 178.2 L136.7 176.0 L135.0 173.5 L133.3 170.7 L131.5 167.8 L129.8 164.8 L128.1 162.0 L126.6 159.5 L125.2 157.4 L124.2 155.9Z" fill="#221c19"/><path d="M149.9 150.2 L150.8 151.3 L152.1 152.7 L153.7 154.3 L155.6 156.0 L157.6 157.7 L159.7 159.4 L161.8 161.0 L163.9 162.1 L166.1 162.9 L168.4 163.7 L170.7 164.4 L172.9 165.0 L175.1 165.5 L177.0 165.9 L178.7 166.1 L179.9 166.2 L180.1 165.8 L179.0 165.1 L177.6 164.2 L175.9 163.3 L173.9 162.3 L171.9 161.2 L169.8 160.2 L167.9 159.1 L166.1 157.9 L164.3 156.8 L162.1 155.7 L159.8 154.5 L157.5 153.3 L155.3 152.1 L153.3 151.1 L151.5 150.3 L150.1 149.8Z" fill="#221c19"/><path d="M265.9 149.8 L264.5 150.3 L262.9 151.1 L261.0 152.1 L258.9 153.3 L256.7 154.5 L254.6 155.7 L252.5 156.8 L250.8 158.0 L249.2 159.1 L247.4 160.2 L245.5 161.3 L243.6 162.3 L241.8 163.3 L240.2 164.2 L238.9 165.1 L237.9 165.8 L238.1 166.2 L239.3 166.1 L240.8 165.8 L242.6 165.5 L244.7 165.0 L246.8 164.4 L249.0 163.7 L251.1 162.9 L253.2 162.0 L255.2 160.9 L257.1 159.4 L259.0 157.7 L260.9 156.0 L262.6 154.3 L264.1 152.7 L265.3 151.3 L266.1 150.2Z" fill="#221c19"/><path d="M121.8 180.0 L121.7 180.9 L121.5 182.0 L121.2 183.4 L121.0 184.9 L121.0 186.7 L121.1 188.7 L121.5 190.9 L122.2 193.2 L123.2 195.8 L124.5 198.7 L126.1 201.7 L127.8 204.9 L129.6 208.2 L131.5 211.3 L133.3 214.3 L135.0 217.1 L136.7 219.7 L138.4 222.1 L140.3 224.2 L142.1 226.3 L143.9 228.2 L145.6 230.2 L147.2 232.1 L148.7 234.1 L150.2 236.2 L151.6 238.4 L153.0 240.6 L154.4 242.8 L155.6 245.0 L156.8 247.1 L157.9 249.1 L158.9 250.9 L159.8 252.6 L160.5 254.3 L161.2 256.0 L161.9 257.5 L162.4 258.9 L163.0 260.2 L163.5 261.2 L163.8 262.1 L164.2 261.9 L164.0 261.1 L163.9 259.9 L163.6 258.6 L163.3 257.1 L162.9 255.4 L162.4 253.6 L161.8 251.8 L161.1 249.9 L160.3 247.9 L159.4 245.8 L158.3 243.6 L157.2 241.3 L156.0 238.9 L154.8 236.5 L153.4 234.2 L152.1 231.9 L150.6 229.6 L149.0 227.5 L147.3 225.3 L145.7 223.2 L144.0 221.1 L142.3 219.0 L140.5 216.8 L138.8 214.5 L137.0 211.9 L135.0 209.1 L133.0 206.1 L131.1 203.0 L129.2 200.0 L127.5 197.1 L126.0 194.5 L124.8 192.2 L124.0 190.2 L123.4 188.3 L123.0 186.5 L122.8 184.9 L122.6 183.4 L122.5 182.1 L122.4 180.9 L122.2 180.0Z" fill="#221c19"/><path d="M149.8 162.1 L150.5 164.2 L151.5 167.1 L152.8 170.4 L154.2 174.1 L155.8 178.0 L157.3 182.0 L158.8 185.9 L160.0 189.5 L161.2 193.1 L162.3 196.7 L163.4 200.4 L164.5 204.1 L165.5 207.8 L166.5 211.4 L167.6 215.0 L168.8 218.5 L170.0 222.0 L171.2 225.6 L172.4 229.2 L173.5 232.7 L174.6 236.2 L175.6 239.4 L176.6 242.4 L177.5 245.1 L178.4 247.4 L179.2 249.6 L179.9 251.5 L180.6 253.3 L181.2 254.8 L181.8 256.1 L182.3 257.2 L182.8 258.1 L183.2 257.9 L183.1 256.9 L183.0 255.7 L182.9 254.3 L182.6 252.7 L182.3 250.9 L181.9 248.8 L181.4 246.6 L180.9 244.1 L180.2 241.4 L179.5 238.3 L178.8 235.0 L177.9 231.5 L177.0 227.9 L176.1 224.2 L175.1 220.5 L174.2 216.9 L173.2 213.3 L172.1 209.7 L170.8 206.1 L169.5 202.4 L168.1 198.8 L166.7 195.2 L165.3 191.6 L163.8 188.1 L162.1 184.5 L160.3 180.7 L158.4 176.8 L156.5 173.1 L154.6 169.6 L152.9 166.4 L151.4 163.9 L150.2 161.9Z" fill="#221c19"/><path d="M257.8 171.8 L257.3 172.1 L256.7 172.2 L256.0 172.5 L255.1 172.9 L254.2 173.7 L253.1 174.8 L251.9 176.3 L250.5 178.3 L249.0 180.8 L247.4 184.0 L245.5 187.6 L243.6 191.4 L241.7 195.4 L239.7 199.3 L237.9 203.2 L236.3 206.8 L234.7 210.1 L233.2 213.3 L231.6 216.5 L230.1 219.6 L228.5 222.8 L227.0 225.9 L225.4 229.0 L223.9 232.2 L222.2 235.6 L220.5 239.2 L218.7 242.9 L216.9 246.6 L215.3 250.0 L213.8 253.2 L212.7 255.9 L211.8 257.9 L212.2 258.1 L213.4 256.3 L215.0 253.8 L216.8 250.9 L218.8 247.6 L220.9 244.1 L223.0 240.5 L225.0 237.0 L226.9 233.8 L228.7 230.8 L230.5 227.8 L232.3 224.8 L234.1 221.8 L235.9 218.8 L237.7 215.7 L239.5 212.5 L241.3 209.2 L243.2 205.7 L245.0 201.8 L246.7 197.7 L248.4 193.6 L250.1 189.6 L251.6 186.0 L252.9 182.7 L254.1 180.1 L255.0 178.2 L255.7 176.6 L256.4 175.5 L256.9 174.7 L257.3 174.0 L257.6 173.4 L257.9 172.7 L258.2 172.2Z" fill="#221c19"/><path d="M279.9 185.9 L278.7 186.5 L277.3 187.4 L275.7 188.6 L274.0 189.9 L272.0 191.5 L270.1 193.2 L268.1 195.1 L266.1 197.3 L264.2 199.6 L262.3 202.1 L260.4 204.8 L258.7 207.8 L256.9 210.8 L255.0 214.0 L253.0 217.2 L250.9 220.4 L248.4 224.0 L245.4 228.0 L242.2 232.2 L239.0 236.5 L235.8 240.6 L233.0 244.3 L230.7 247.5 L229.0 249.9 L229.4 250.1 L231.4 248.0 L234.0 245.2 L237.2 241.7 L240.6 237.9 L244.2 233.8 L247.6 229.8 L250.9 226.0 L253.7 222.6 L256.2 219.4 L258.5 216.3 L260.6 213.2 L262.7 210.2 L264.6 207.4 L266.2 204.7 L267.8 202.1 L269.3 199.7 L270.9 197.6 L272.5 195.5 L274.1 193.5 L275.7 191.7 L277.1 190.1 L278.4 188.6 L279.4 187.2 L280.1 186.1Z" fill="#221c19"/><path d="M96.0 222.3 L96.8 222.4 L97.8 222.6 L98.9 222.7 L100.1 222.8 L101.4 222.9 L102.7 223.0 L104.1 223.3 L105.6 223.7 L107.3 224.3 L109.3 225.0 L111.4 225.8 L113.6 226.6 L115.8 227.6 L118.0 228.6 L120.0 229.6 L121.9 230.6 L123.6 231.7 L125.3 232.8 L127.0 233.7 L128.7 234.6 L130.3 235.6 L131.7 236.6 L133.1 237.7 L134.5 239.0 L135.7 240.3 L136.9 241.8 L138.0 243.5 L139.1 245.2 L140.1 247.1 L141.0 249.0 L141.9 250.9 L142.7 252.8 L143.4 254.9 L144.0 257.2 L144.6 259.7 L145.1 262.2 L145.5 264.6 L145.9 266.8 L146.4 268.7 L146.7 270.0 L147.3 270.0 L147.3 268.6 L147.4 266.7 L147.5 264.5 L147.5 262.0 L147.4 259.4 L147.2 256.7 L146.9 254.1 L146.5 251.8 L146.0 249.5 L145.3 247.3 L144.6 245.1 L143.8 243.0 L142.9 240.8 L141.8 238.7 L140.7 236.7 L139.3 234.8 L137.9 233.1 L136.3 231.4 L134.7 229.9 L132.9 228.4 L131.1 227.1 L129.3 225.8 L127.2 224.9 L125.1 224.0 L122.9 223.1 L120.5 222.3 L118.0 221.6 L115.5 220.9 L113.0 220.3 L110.6 219.9 L108.4 219.5 L106.4 219.3 L104.5 219.2 L102.7 219.3 L101.1 219.6 L99.7 220.0 L98.5 220.4 L97.5 220.9 L96.6 221.4 L96.0 221.7Z" fill="#221c19"/><path d="M291.8 170.0 L291.2 171.1 L290.5 172.7 L289.8 174.7 L289.1 176.8 L288.3 179.1 L287.5 181.3 L286.7 183.4 L286.2 185.4 L285.7 187.3 L285.1 189.4 L284.4 191.5 L283.7 193.5 L283.0 195.5 L282.5 197.2 L282.1 198.8 L281.9 199.9 L282.1 200.1 L282.9 199.1 L283.8 197.8 L284.8 196.3 L285.8 194.5 L286.9 192.5 L287.9 190.5 L288.9 188.5 L289.8 186.6 L290.5 184.5 L290.9 182.2 L291.3 179.8 L291.7 177.4 L291.9 175.2 L292.1 173.1 L292.2 171.4 L292.2 170.0Z" fill="#221c19"/></g>
<!-- rocks -->
<g filter="url(#b3)">
  <path d="M144 296 C150 284 170 284 178 296 C180 320 190 340 196 352 L132 352 C140 336 146 318 144 296 Z" fill="#55473e"/>
  <ellipse cx="248" cy="312" rx="14" ry="12" fill="#8a857f"/>
  <ellipse cx="275" cy="310" rx="12" ry="7" fill="#8c8780"/>
  <path d="M235 300 C280 292 360 286 528 276 L528 352 H232 Z" fill="#6e6458"/>
  <path d="M355 282 C355 268 370 262 390 266 C405 270 408 285 404 294 L358 296 Z" fill="#6f6760"/>
  <ellipse cx="422" cy="292" rx="24" ry="12" fill="#7a726a"/>
  <ellipse cx="472" cy="285" rx="28" ry="9" fill="#7a726a"/>
  <ellipse cx="510" cy="288" rx="22" ry="10" fill="#807870"/>
  <ellipse cx="290" cy="300" rx="42" ry="9" fill="#8a8278"/>
  <ellipse cx="250" cy="310" rx="14" ry="8" fill="#787068"/>
  <ellipse cx="325" cy="322" rx="16" ry="8" fill="#7b6f62"/>
  <ellipse cx="372" cy="322" rx="15" ry="14" fill="#6c6b70"/>
  <ellipse cx="408" cy="332" rx="15" ry="12" fill="#66676e"/>
  <ellipse cx="460" cy="330" rx="20" ry="12" fill="#7a7068"/>
</g>
<g filter="url(#b4)" opacity="0.7"><ellipse cx="69.6" cy="216.9" rx="1.4" ry="1.1" fill="#726658" opacity="0.6"/><ellipse cx="25.8" cy="227.9" rx="2.0" ry="1.4" fill="#786b5d" opacity="0.6"/><ellipse cx="30.4" cy="215.5" rx="1.6" ry="1.7" fill="#948776" opacity="0.6"/><ellipse cx="45.0" cy="225.9" rx="1.0" ry="1.3" fill="#b0a18e" opacity="0.6"/><ellipse cx="42.7" cy="318.8" rx="2.1" ry="0.8" fill="#978978" opacity="0.6"/><ellipse cx="59.0" cy="309.9" rx="1.0" ry="0.9" fill="#ac9d8b" opacity="0.6"/><ellipse cx="46.1" cy="209.2" rx="1.3" ry="0.8" fill="#726658" opacity="0.6"/><ellipse cx="14.5" cy="230.4" rx="1.4" ry="0.8" fill="#918373" opacity="0.6"/><ellipse cx="9.2" cy="173.9" rx="2.1" ry="0.7" fill="#b8a995" opacity="0.6"/><ellipse cx="72.1" cy="191.6" rx="1.5" ry="0.8" fill="#928574" opacity="0.6"/><ellipse cx="69.5" cy="173.5" rx="1.9" ry="1.4" fill="#b2a490" opacity="0.6"/><ellipse cx="32.2" cy="216.3" rx="0.8" ry="1.5" fill="#786b5e" opacity="0.6"/><ellipse cx="23.8" cy="286.9" rx="2.4" ry="0.8" fill="#ad9e8b" opacity="0.6"/><ellipse cx="23.6" cy="320.6" rx="1.4" ry="1.3" fill="#867969" opacity="0.6"/><ellipse cx="47.3" cy="321.7" rx="0.9" ry="1.3" fill="#7f7364" opacity="0.6"/><ellipse cx="80.4" cy="319.6" rx="2.3" ry="1.7" fill="#a29482" opacity="0.6"/><ellipse cx="63.3" cy="261.9" rx="1.3" ry="1.3" fill="#796d5f" opacity="0.6"/><ellipse cx="10.3" cy="295.8" rx="1.6" ry="1.8" fill="#7a6d5f" opacity="0.6"/><ellipse cx="11.5" cy="179.2" rx="1.1" ry="1.5" fill="#8e8171" opacity="0.6"/><ellipse cx="0.4" cy="323.3" rx="2.1" ry="1.1" fill="#ae9f8c" opacity="0.6"/><ellipse cx="36.3" cy="291.1" rx="1.5" ry="1.0" fill="#948776" opacity="0.6"/><ellipse cx="56.2" cy="291.9" rx="2.3" ry="0.8" fill="#ab9d8a" opacity="0.6"/><ellipse cx="37.9" cy="251.8" rx="1.4" ry="0.8" fill="#988a79" opacity="0.6"/><ellipse cx="10.9" cy="230.3" rx="2.5" ry="1.7" fill="#908372" opacity="0.6"/><ellipse cx="103.8" cy="182.8" rx="1.8" ry="1.0" fill="#a09280" opacity="0.6"/><ellipse cx="73.1" cy="343.5" rx="1.9" ry="1.0" fill="#928474" opacity="0.6"/><ellipse cx="44.0" cy="331.3" rx="1.1" ry="1.4" fill="#706456" opacity="0.6"/><ellipse cx="57.3" cy="187.3" rx="1.4" ry="1.3" fill="#9f917f" opacity="0.6"/><ellipse cx="53.3" cy="267.4" rx="1.5" ry="0.7" fill="#988a79" opacity="0.6"/><ellipse cx="23.1" cy="332.2" rx="1.0" ry="1.6" fill="#978978" opacity="0.6"/><ellipse cx="32.4" cy="189.1" rx="1.2" ry="1.2" fill="#958877" opacity="0.6"/><ellipse cx="70.9" cy="212.8" rx="1.0" ry="1.2" fill="#988b7a" opacity="0.6"/><ellipse cx="75.3" cy="186.4" rx="0.9" ry="1.1" fill="#8c7f6f" opacity="0.6"/><ellipse cx="14.7" cy="350.3" rx="1.0" ry="1.6" fill="#a49583" opacity="0.6"/><ellipse cx="50.2" cy="202.8" rx="1.8" ry="1.5" fill="#b6a793" opacity="0.6"/><ellipse cx="17.5" cy="311.7" rx="1.2" ry="1.0" fill="#726658" opacity="0.6"/><ellipse cx="1.9" cy="279.0" rx="1.3" ry="1.4" fill="#7d7162" opacity="0.6"/><ellipse cx="54.5" cy="332.0" rx="2.3" ry="1.3" fill="#9c8e7d" opacity="0.6"/><ellipse cx="21.5" cy="306.2" rx="2.1" ry="1.4" fill="#877a6b" opacity="0.6"/><ellipse cx="105.7" cy="194.1" rx="2.1" ry="1.7" fill="#897c6d" opacity="0.6"/><ellipse cx="92.4" cy="179.8" rx="1.0" ry="1.3" fill="#9b8d7c" opacity="0.6"/><ellipse cx="102.8" cy="192.3" rx="1.9" ry="0.9" fill="#b3a491" opacity="0.6"/><ellipse cx="24.7" cy="252.4" rx="1.8" ry="0.7" fill="#ac9e8b" opacity="0.6"/><ellipse cx="2.7" cy="191.9" rx="1.1" ry="1.3" fill="#aa9b89" opacity="0.6"/><ellipse cx="37.1" cy="295.7" rx="1.0" ry="1.7" fill="#8a7d6d" opacity="0.6"/><ellipse cx="68.9" cy="296.1" rx="2.4" ry="0.6" fill="#aa9c89" opacity="0.6"/><ellipse cx="43.8" cy="199.2" rx="2.3" ry="1.6" fill="#938675" opacity="0.6"/><ellipse cx="4.5" cy="204.8" rx="2.0" ry="1.1" fill="#ab9c8a" opacity="0.6"/><ellipse cx="60.9" cy="200.5" rx="1.5" ry="1.6" fill="#ad9e8b" opacity="0.6"/><ellipse cx="78.2" cy="185.7" rx="1.2" ry="1.7" fill="#86796a" opacity="0.6"/><ellipse cx="75.4" cy="179.9" rx="1.4" ry="1.2" fill="#7a6e60" opacity="0.6"/><ellipse cx="73.9" cy="241.8" rx="0.8" ry="1.3" fill="#887b6b" opacity="0.6"/><ellipse cx="42.7" cy="175.7" rx="2.5" ry="0.7" fill="#908372" opacity="0.6"/><ellipse cx="18.7" cy="292.8" rx="1.3" ry="1.2" fill="#827566" opacity="0.6"/><ellipse cx="33.5" cy="274.4" rx="2.4" ry="1.8" fill="#958877" opacity="0.6"/><ellipse cx="4.4" cy="272.9" rx="2.3" ry="1.5" fill="#a79987" opacity="0.6"/><ellipse cx="81.0" cy="286.2" rx="1.3" ry="1.6" fill="#897c6c" opacity="0.6"/><ellipse cx="65.1" cy="286.3" rx="1.7" ry="1.1" fill="#887b6b" opacity="0.6"/><ellipse cx="7.7" cy="232.7" rx="2.5" ry="1.2" fill="#86796a" opacity="0.6"/><ellipse cx="47.0" cy="215.8" rx="1.4" ry="0.8" fill="#7f7264" opacity="0.6"/><ellipse cx="0.9" cy="328.8" rx="1.6" ry="1.3" fill="#8f8272" opacity="0.6"/><ellipse cx="38.7" cy="202.4" rx="1.3" ry="1.0" fill="#726659" opacity="0.6"/><ellipse cx="10.2" cy="204.2" rx="2.5" ry="1.0" fill="#998b7a" opacity="0.6"/><ellipse cx="111.1" cy="184.2" rx="2.3" ry="0.9" fill="#928474" opacity="0.6"/><ellipse cx="33.0" cy="176.2" rx="1.3" ry="1.4" fill="#7a6d5f" opacity="0.6"/><ellipse cx="27.9" cy="243.9" rx="1.8" ry="1.6" fill="#7d7062" opacity="0.6"/><ellipse cx="83.0" cy="207.4" rx="2.4" ry="1.3" fill="#a59684" opacity="0.6"/><ellipse cx="10.2" cy="317.7" rx="1.4" ry="0.8" fill="#afa18d" opacity="0.6"/><ellipse cx="24.1" cy="268.6" rx="1.9" ry="1.7" fill="#afa18d" opacity="0.6"/><ellipse cx="27.2" cy="230.8" rx="1.9" ry="1.1" fill="#a69785" opacity="0.6"/><ellipse cx="7.4" cy="246.6" rx="1.9" ry="1.0" fill="#716557" opacity="0.6"/><ellipse cx="63.3" cy="279.6" rx="1.6" ry="0.6" fill="#817465" opacity="0.6"/><ellipse cx="78.6" cy="302.3" rx="1.0" ry="0.8" fill="#86796a" opacity="0.6"/><ellipse cx="18.3" cy="310.1" rx="2.2" ry="1.1" fill="#74685a" opacity="0.6"/><ellipse cx="68.9" cy="277.9" rx="1.9" ry="1.3" fill="#978979" opacity="0.6"/><ellipse cx="42.3" cy="305.4" rx="2.0" ry="1.5" fill="#817465" opacity="0.6"/><ellipse cx="58.0" cy="222.1" rx="2.4" ry="0.8" fill="#958777" opacity="0.6"/><ellipse cx="1.2" cy="257.6" rx="2.1" ry="1.0" fill="#9f917f" opacity="0.6"/><ellipse cx="96.8" cy="188.2" rx="1.0" ry="0.7" fill="#706456" opacity="0.6"/><ellipse cx="64.2" cy="271.9" rx="2.4" ry="1.0" fill="#7b6f60" opacity="0.6"/><ellipse cx="19.1" cy="203.9" rx="2.4" ry="0.8" fill="#a59784" opacity="0.6"/><ellipse cx="3.7" cy="312.1" rx="2.5" ry="1.2" fill="#807364" opacity="0.6"/><ellipse cx="81.4" cy="234.0" rx="1.6" ry="1.0" fill="#aa9b89" opacity="0.6"/><ellipse cx="115.6" cy="191.4" rx="0.9" ry="1.4" fill="#a59684" opacity="0.6"/><ellipse cx="51.4" cy="327.5" rx="1.8" ry="1.1" fill="#726658" opacity="0.6"/><ellipse cx="80.3" cy="212.3" rx="1.2" ry="1.1" fill="#807465" opacity="0.6"/><ellipse cx="29.6" cy="208.6" rx="1.9" ry="1.0" fill="#a69886" opacity="0.6"/><ellipse cx="72.9" cy="200.2" rx="2.3" ry="0.9" fill="#aea08d" opacity="0.6"/><ellipse cx="36.2" cy="231.7" rx="2.3" ry="0.8" fill="#928474" opacity="0.6"/><ellipse cx="58.0" cy="276.3" rx="1.2" ry="1.7" fill="#b0a18e" opacity="0.6"/><ellipse cx="46.1" cy="312.4" rx="1.1" ry="1.6" fill="#aea08d" opacity="0.6"/><ellipse cx="3.1" cy="192.1" rx="0.8" ry="1.7" fill="#b7a894" opacity="0.6"/><ellipse cx="19.3" cy="304.5" rx="1.1" ry="1.4" fill="#75695b" opacity="0.6"/><ellipse cx="11.5" cy="233.1" rx="2.0" ry="1.7" fill="#b2a490" opacity="0.6"/><ellipse cx="30.0" cy="314.6" rx="0.9" ry="1.2" fill="#a19381" opacity="0.6"/><ellipse cx="29.6" cy="249.5" rx="0.8" ry="1.8" fill="#75695b" opacity="0.6"/><ellipse cx="40.5" cy="330.1" rx="1.6" ry="0.8" fill="#776a5c" opacity="0.6"/><ellipse cx="54.8" cy="204.2" rx="1.1" ry="1.5" fill="#a19381" opacity="0.6"/><ellipse cx="64.1" cy="192.2" rx="1.6" ry="1.7" fill="#887b6b" opacity="0.6"/><ellipse cx="44.7" cy="210.7" rx="2.3" ry="1.5" fill="#b6a793" opacity="0.6"/><ellipse cx="34.9" cy="203.9" rx="0.9" ry="0.7" fill="#817566" opacity="0.6"/><ellipse cx="65.1" cy="245.5" rx="1.4" ry="0.6" fill="#978a79" opacity="0.6"/><ellipse cx="69.6" cy="270.8" rx="2.5" ry="1.6" fill="#a19381" opacity="0.6"/><ellipse cx="40.7" cy="247.4" rx="1.5" ry="1.1" fill="#b6a894" opacity="0.6"/><ellipse cx="52.5" cy="197.7" rx="0.8" ry="1.3" fill="#b8a995" opacity="0.6"/><ellipse cx="118.6" cy="217.8" rx="1.4" ry="0.9" fill="#9b8d7c" opacity="0.6"/><ellipse cx="25.4" cy="192.9" rx="2.1" ry="1.7" fill="#ad9e8b" opacity="0.6"/><ellipse cx="6.3" cy="297.0" rx="1.9" ry="1.3" fill="#86796a" opacity="0.6"/><ellipse cx="40.4" cy="346.9" rx="2.1" ry="1.6" fill="#6e6255" opacity="0.6"/><ellipse cx="65.3" cy="278.6" rx="1.2" ry="1.4" fill="#b8a995" opacity="0.6"/><ellipse cx="67.4" cy="282.3" rx="1.3" ry="1.4" fill="#a09281" opacity="0.6"/><ellipse cx="69.5" cy="212.2" rx="1.3" ry="1.7" fill="#9b8e7c" opacity="0.6"/><ellipse cx="60.6" cy="301.9" rx="1.6" ry="0.9" fill="#958776" opacity="0.6"/><ellipse cx="18.2" cy="338.9" rx="1.7" ry="1.2" fill="#958877" opacity="0.6"/><ellipse cx="104.1" cy="215.0" rx="2.2" ry="1.2" fill="#7a6e60" opacity="0.6"/><ellipse cx="82.0" cy="320.9" rx="2.3" ry="0.7" fill="#b1a28f" opacity="0.6"/><ellipse cx="48.8" cy="321.8" rx="1.0" ry="0.8" fill="#ab9c8a" opacity="0.6"/><ellipse cx="32.2" cy="190.5" rx="2.2" ry="1.2" fill="#887b6c" opacity="0.6"/><ellipse cx="58.0" cy="187.8" rx="2.5" ry="1.4" fill="#8b7e6e" opacity="0.6"/><ellipse cx="57.5" cy="258.1" rx="2.1" ry="0.8" fill="#a99b88" opacity="0.6"/><ellipse cx="66.6" cy="214.8" rx="1.4" ry="1.1" fill="#897c6d" opacity="0.6"/><ellipse cx="2.3" cy="208.2" rx="0.9" ry="0.8" fill="#988b7a" opacity="0.6"/><ellipse cx="91.9" cy="221.4" rx="1.2" ry="1.6" fill="#86796a" opacity="0.6"/><ellipse cx="11.7" cy="286.5" rx="1.1" ry="1.1" fill="#ae9f8c" opacity="0.6"/><ellipse cx="47.6" cy="179.9" rx="1.4" ry="1.5" fill="#8f8171" opacity="0.6"/><ellipse cx="37.8" cy="245.4" rx="2.2" ry="1.0" fill="#9e907f" opacity="0.6"/><ellipse cx="49.3" cy="276.2" rx="1.1" ry="1.8" fill="#b3a491" opacity="0.6"/><ellipse cx="9.1" cy="308.1" rx="1.7" ry="1.2" fill="#8a7d6d" opacity="0.6"/><ellipse cx="3.3" cy="278.7" rx="1.6" ry="1.6" fill="#908373" opacity="0.6"/><ellipse cx="53.1" cy="257.2" rx="1.5" ry="1.2" fill="#b0a28e" opacity="0.6"/><ellipse cx="65.5" cy="320.4" rx="2.1" ry="1.1" fill="#a09280" opacity="0.6"/><ellipse cx="5.2" cy="294.4" rx="2.1" ry="1.5" fill="#978979" opacity="0.6"/><ellipse cx="15.1" cy="211.7" rx="2.2" ry="0.7" fill="#73675a" opacity="0.6"/><ellipse cx="11.3" cy="307.6" rx="0.9" ry="1.4" fill="#988a79" opacity="0.6"/><ellipse cx="7.0" cy="296.4" rx="1.8" ry="1.8" fill="#8d8070" opacity="0.6"/><ellipse cx="18.6" cy="232.2" rx="0.8" ry="1.8" fill="#948776" opacity="0.6"/><ellipse cx="35.2" cy="219.2" rx="1.2" ry="1.6" fill="#857869" opacity="0.6"/><ellipse cx="71.1" cy="264.0" rx="0.9" ry="1.0" fill="#8d8070" opacity="0.6"/><ellipse cx="109.7" cy="218.3" rx="0.9" ry="1.2" fill="#7d7062" opacity="0.6"/><ellipse cx="47.8" cy="255.6" rx="1.8" ry="1.0" fill="#928574" opacity="0.6"/><ellipse cx="102.6" cy="208.0" rx="1.7" ry="0.7" fill="#b2a490" opacity="0.6"/><ellipse cx="40.2" cy="268.0" rx="1.8" ry="1.0" fill="#8c7f6f" opacity="0.6"/><ellipse cx="35.0" cy="315.3" rx="2.0" ry="1.6" fill="#837667" opacity="0.6"/><ellipse cx="75.8" cy="253.8" rx="1.6" ry="1.7" fill="#b4a591" opacity="0.6"/><ellipse cx="7.4" cy="250.1" rx="0.9" ry="1.6" fill="#9d907e" opacity="0.6"/><ellipse cx="9.2" cy="279.3" rx="2.4" ry="1.3" fill="#7b6e60" opacity="0.6"/><ellipse cx="37.7" cy="210.0" rx="1.0" ry="1.7" fill="#ac9e8b" opacity="0.6"/><ellipse cx="26.5" cy="190.2" rx="2.1" ry="1.7" fill="#75685b" opacity="0.6"/><ellipse cx="53.1" cy="290.6" rx="2.3" ry="1.4" fill="#817465" opacity="0.6"/><ellipse cx="19.8" cy="182.2" rx="0.9" ry="1.6" fill="#a29482" opacity="0.6"/><ellipse cx="37.6" cy="213.9" rx="1.3" ry="1.3" fill="#998b7a" opacity="0.6"/><ellipse cx="19.7" cy="336.1" rx="2.2" ry="0.8" fill="#86796a" opacity="0.6"/><ellipse cx="50.1" cy="177.9" rx="1.9" ry="0.9" fill="#8a7d6d" opacity="0.6"/><ellipse cx="69.9" cy="188.8" rx="2.0" ry="1.1" fill="#908373" opacity="0.6"/><ellipse cx="86.9" cy="192.6" rx="1.0" ry="1.7" fill="#ac9d8a" opacity="0.6"/><ellipse cx="67.4" cy="224.3" rx="2.1" ry="1.2" fill="#887b6b" opacity="0.6"/><ellipse cx="119.0" cy="188.7" rx="2.3" ry="1.3" fill="#928474" opacity="0.6"/><ellipse cx="69.2" cy="187.9" rx="1.3" ry="1.7" fill="#786c5e" opacity="0.6"/><ellipse cx="108.2" cy="212.9" rx="0.9" ry="1.3" fill="#b3a491" opacity="0.6"/><ellipse cx="6.4" cy="232.0" rx="1.2" ry="1.5" fill="#8f8272" opacity="0.6"/><ellipse cx="22.9" cy="313.8" rx="0.9" ry="1.3" fill="#847768" opacity="0.6"/><ellipse cx="12.2" cy="271.3" rx="1.8" ry="1.2" fill="#a99a88" opacity="0.6"/><ellipse cx="4.3" cy="264.4" rx="1.9" ry="0.8" fill="#75695b" opacity="0.6"/><ellipse cx="74.0" cy="235.5" rx="1.9" ry="0.8" fill="#8a7c6d" opacity="0.6"/><ellipse cx="21.7" cy="341.5" rx="2.2" ry="1.6" fill="#86796a" opacity="0.6"/><ellipse cx="61.5" cy="198.8" rx="2.3" ry="0.7" fill="#75685b" opacity="0.6"/><ellipse cx="63.5" cy="268.5" rx="1.6" ry="0.8" fill="#766a5c" opacity="0.6"/><ellipse cx="68.5" cy="263.2" rx="1.1" ry="1.1" fill="#897c6c" opacity="0.6"/><ellipse cx="26.0" cy="194.9" rx="2.3" ry="1.2" fill="#7f7364" opacity="0.6"/><ellipse cx="114.0" cy="174.7" rx="1.6" ry="1.5" fill="#b4a592" opacity="0.6"/><ellipse cx="73.0" cy="296.0" rx="2.1" ry="0.8" fill="#7f7263" opacity="0.6"/><ellipse cx="33.8" cy="177.6" rx="1.7" ry="1.0" fill="#8b7e6e" opacity="0.6"/><ellipse cx="114.0" cy="187.2" rx="1.2" ry="1.3" fill="#998b7a" opacity="0.6"/><ellipse cx="8.0" cy="216.2" rx="2.5" ry="0.6" fill="#9a8d7b" opacity="0.6"/><ellipse cx="79.1" cy="296.5" rx="1.4" ry="1.6" fill="#ab9c89" opacity="0.6"/><ellipse cx="59.1" cy="337.8" rx="2.4" ry="1.1" fill="#6e6255" opacity="0.6"/><ellipse cx="52.1" cy="187.8" rx="2.0" ry="1.4" fill="#807364" opacity="0.6"/><ellipse cx="19.4" cy="234.0" rx="1.1" ry="0.9" fill="#786c5e" opacity="0.6"/><ellipse cx="42.4" cy="347.7" rx="2.1" ry="1.2" fill="#b8a995" opacity="0.6"/><ellipse cx="63.7" cy="312.3" rx="2.1" ry="1.4" fill="#b2a390" opacity="0.6"/><ellipse cx="25.5" cy="284.5" rx="2.1" ry="0.7" fill="#ad9e8b" opacity="0.6"/><ellipse cx="20.8" cy="345.8" rx="2.1" ry="0.8" fill="#a09280" opacity="0.6"/><ellipse cx="75.6" cy="250.4" rx="2.1" ry="1.6" fill="#ab9d8a" opacity="0.6"/><ellipse cx="38.3" cy="345.0" rx="2.4" ry="0.7" fill="#958877" opacity="0.6"/><ellipse cx="32.3" cy="322.9" rx="1.1" ry="1.1" fill="#7f7264" opacity="0.6"/><ellipse cx="30.3" cy="260.7" rx="2.0" ry="1.5" fill="#b2a390" opacity="0.6"/><ellipse cx="50.2" cy="313.1" rx="2.0" ry="1.7" fill="#a99b88" opacity="0.6"/><ellipse cx="11.1" cy="289.4" rx="1.4" ry="1.3" fill="#ac9e8b" opacity="0.6"/><ellipse cx="0.6" cy="260.0" rx="1.0" ry="1.6" fill="#6f6356" opacity="0.6"/><ellipse cx="53.6" cy="280.9" rx="1.4" ry="0.9" fill="#908272" opacity="0.6"/><ellipse cx="45.3" cy="324.0" rx="1.3" ry="0.7" fill="#9c8e7d" opacity="0.6"/><ellipse cx="34.7" cy="298.2" rx="1.9" ry="1.6" fill="#8f8171" opacity="0.6"/><ellipse cx="15.5" cy="294.9" rx="2.2" ry="0.8" fill="#716457" opacity="0.6"/><ellipse cx="34.7" cy="344.4" rx="1.2" ry="1.7" fill="#897c6c" opacity="0.6"/><ellipse cx="78.1" cy="332.9" rx="1.6" ry="1.7" fill="#8b7e6e" opacity="0.6"/><ellipse cx="64.9" cy="349.9" rx="2.2" ry="0.8" fill="#7c6f61" opacity="0.6"/><ellipse cx="67.5" cy="172.1" rx="2.4" ry="1.1" fill="#7b6e60" opacity="0.6"/><ellipse cx="103.6" cy="217.1" rx="1.0" ry="1.3" fill="#887b6b" opacity="0.6"/><ellipse cx="48.2" cy="339.2" rx="1.9" ry="0.7" fill="#b1a28f" opacity="0.6"/><ellipse cx="79.9" cy="251.9" rx="1.4" ry="1.4" fill="#b5a693" opacity="0.6"/><ellipse cx="80.9" cy="239.7" rx="2.0" ry="1.7" fill="#958776" opacity="0.6"/><ellipse cx="63.8" cy="237.5" rx="0.9" ry="1.6" fill="#b7a894" opacity="0.6"/><ellipse cx="57.3" cy="307.2" rx="2.0" ry="1.5" fill="#b0a28e" opacity="0.6"/><ellipse cx="4.5" cy="230.5" rx="2.4" ry="1.7" fill="#786b5d" opacity="0.6"/><ellipse cx="18.5" cy="277.8" rx="0.9" ry="1.1" fill="#998b7a" opacity="0.6"/><ellipse cx="36.0" cy="309.2" rx="1.7" ry="1.1" fill="#837667" opacity="0.6"/><ellipse cx="48.7" cy="345.3" rx="2.0" ry="0.9" fill="#a39583" opacity="0.6"/><ellipse cx="20.7" cy="275.5" rx="2.1" ry="1.0" fill="#ab9d8a" opacity="0.6"/><ellipse cx="17.9" cy="264.9" rx="1.1" ry="1.5" fill="#afa18e" opacity="0.6"/><ellipse cx="21.8" cy="228.2" rx="1.3" ry="1.1" fill="#726558" opacity="0.6"/><ellipse cx="24.0" cy="227.7" rx="1.1" ry="1.0" fill="#b4a592" opacity="0.6"/><ellipse cx="56.1" cy="191.5" rx="1.5" ry="1.1" fill="#817465" opacity="0.6"/><ellipse cx="26.1" cy="335.6" rx="2.2" ry="1.4" fill="#8f8272" opacity="0.6"/><ellipse cx="19.5" cy="308.3" rx="1.7" ry="1.4" fill="#918373" opacity="0.6"/><ellipse cx="96.3" cy="221.6" rx="2.4" ry="1.2" fill="#897c6c" opacity="0.6"/><ellipse cx="36.9" cy="285.4" rx="2.1" ry="0.6" fill="#817465" opacity="0.6"/><ellipse cx="45.3" cy="341.2" rx="1.2" ry="0.7" fill="#817566" opacity="0.6"/><ellipse cx="70.2" cy="307.7" rx="1.5" ry="1.6" fill="#a09281" opacity="0.6"/><ellipse cx="14.2" cy="227.3" rx="2.4" ry="1.4" fill="#9e907e" opacity="0.6"/><ellipse cx="50.5" cy="341.3" rx="1.4" ry="1.1" fill="#a59785" opacity="0.6"/><ellipse cx="23.8" cy="328.9" rx="1.7" ry="1.4" fill="#958877" opacity="0.6"/><ellipse cx="115.4" cy="196.0" rx="0.9" ry="1.1" fill="#877a6b" opacity="0.6"/><ellipse cx="64.3" cy="325.3" rx="1.8" ry="1.1" fill="#a09280" opacity="0.6"/><ellipse cx="73.4" cy="221.3" rx="2.1" ry="1.6" fill="#ad9e8b" opacity="0.6"/><ellipse cx="19.3" cy="292.9" rx="1.7" ry="1.7" fill="#a69886" opacity="0.6"/><ellipse cx="112.5" cy="195.6" rx="2.0" ry="1.3" fill="#a29482" opacity="0.6"/><ellipse cx="35.2" cy="184.1" rx="2.2" ry="0.9" fill="#9b8d7c" opacity="0.6"/><ellipse cx="27.3" cy="212.3" rx="1.9" ry="1.8" fill="#75685b" opacity="0.6"/><ellipse cx="89.5" cy="185.0" rx="1.4" ry="0.6" fill="#ac9e8b" opacity="0.6"/><ellipse cx="418.3" cy="302.9" rx="0.9" ry="1.2" fill="#5e564e"/><ellipse cx="396.3" cy="341.0" rx="2.6" ry="0.8" fill="#49413a"/><ellipse cx="298.4" cy="330.9" rx="1.5" ry="1.4" fill="#645b53"/><ellipse cx="296.5" cy="340.2" rx="2.6" ry="1.7" fill="#585048"/><ellipse cx="391.0" cy="296.7" rx="0.9" ry="1.3" fill="#8c8279"/><ellipse cx="357.5" cy="298.6" rx="2.4" ry="1.4" fill="#7e756c"/><ellipse cx="350.4" cy="324.2" rx="1.3" ry="1.8" fill="#7a7169"/><ellipse cx="526.7" cy="340.8" rx="1.5" ry="2.0" fill="#9c9288"/><ellipse cx="253.1" cy="322.2" rx="1.8" ry="1.6" fill="#524942"/><ellipse cx="441.7" cy="320.9" rx="1.2" ry="1.2" fill="#645c54"/><ellipse cx="315.6" cy="306.1" rx="1.9" ry="1.2" fill="#887e75"/><ellipse cx="290.5" cy="335.1" rx="1.4" ry="1.4" fill="#574f47"/><ellipse cx="439.6" cy="350.5" rx="2.9" ry="1.9" fill="#897f76"/><ellipse cx="445.9" cy="336.0" rx="1.3" ry="0.6" fill="#4b433c"/><ellipse cx="487.6" cy="336.2" rx="1.4" ry="1.1" fill="#7e756c"/><ellipse cx="280.4" cy="331.0" rx="1.5" ry="0.7" fill="#9f958b"/><ellipse cx="283.9" cy="315.2" rx="2.6" ry="1.2" fill="#968d83"/><ellipse cx="262.2" cy="301.1" rx="2.5" ry="1.3" fill="#534b44"/><ellipse cx="525.2" cy="347.0" rx="1.8" ry="1.8" fill="#8d837a"/><ellipse cx="270.0" cy="301.2" rx="1.9" ry="0.9" fill="#786f66"/><ellipse cx="306.6" cy="296.2" rx="2.4" ry="1.9" fill="#978d84"/><ellipse cx="522.2" cy="319.9" rx="1.6" ry="1.7" fill="#877e75"/><ellipse cx="481.0" cy="302.6" rx="1.3" ry="1.4" fill="#473f38"/><ellipse cx="344.2" cy="295.5" rx="2.5" ry="1.2" fill="#90877d"/><ellipse cx="244.8" cy="345.7" rx="1.0" ry="1.1" fill="#766d64"/><ellipse cx="416.9" cy="345.5" rx="2.2" ry="0.9" fill="#716860"/><ellipse cx="304.1" cy="346.6" rx="1.0" ry="1.4" fill="#685f57"/><ellipse cx="269.4" cy="306.4" rx="2.1" ry="1.5" fill="#6f665d"/><ellipse cx="441.3" cy="320.1" rx="2.4" ry="0.7" fill="#4c433c"/><ellipse cx="371.3" cy="317.8" rx="2.4" ry="0.9" fill="#827970"/><ellipse cx="424.3" cy="334.4" rx="1.1" ry="1.9" fill="#70675f"/><ellipse cx="409.3" cy="298.6" rx="3.0" ry="0.9" fill="#5b524b"/><ellipse cx="348.1" cy="339.9" rx="2.2" ry="1.6" fill="#90867d"/><ellipse cx="243.3" cy="300.3" rx="2.6" ry="0.7" fill="#9d9389"/><ellipse cx="246.4" cy="308.7" rx="1.3" ry="1.5" fill="#998f86"/><ellipse cx="507.4" cy="331.4" rx="1.4" ry="0.8" fill="#988e85"/><ellipse cx="237.4" cy="338.2" rx="2.9" ry="1.6" fill="#4f473f"/><ellipse cx="287.3" cy="341.0" rx="1.9" ry="0.7" fill="#544c44"/><ellipse cx="464.9" cy="345.7" rx="0.8" ry="1.8" fill="#988e84"/><ellipse cx="396.5" cy="341.8" rx="2.2" ry="1.4" fill="#736a61"/><ellipse cx="468.7" cy="299.4" rx="2.0" ry="1.0" fill="#4a423b"/><ellipse cx="349.5" cy="295.4" rx="0.9" ry="1.8" fill="#897f76"/><ellipse cx="472.2" cy="321.1" rx="2.2" ry="0.9" fill="#504841"/><ellipse cx="359.0" cy="301.3" rx="2.0" ry="1.1" fill="#9d9389"/><ellipse cx="259.8" cy="336.6" rx="2.7" ry="0.7" fill="#92887f"/><ellipse cx="340.8" cy="312.3" rx="1.1" ry="1.4" fill="#8a8177"/><ellipse cx="521.7" cy="338.8" rx="1.0" ry="0.8" fill="#463e37"/><ellipse cx="437.0" cy="329.1" rx="1.8" ry="1.2" fill="#746b63"/><ellipse cx="412.9" cy="332.0" rx="2.4" ry="1.7" fill="#988e84"/><ellipse cx="502.2" cy="342.7" rx="0.9" ry="1.6" fill="#867d73"/><ellipse cx="483.6" cy="319.6" rx="1.2" ry="1.9" fill="#958b81"/><ellipse cx="362.8" cy="335.3" rx="1.5" ry="1.1" fill="#5c544c"/><ellipse cx="328.0" cy="300.4" rx="3.0" ry="1.5" fill="#6d645c"/><ellipse cx="507.9" cy="338.5" rx="3.0" ry="1.7" fill="#91877e"/><ellipse cx="313.2" cy="309.2" rx="0.8" ry="0.9" fill="#6b625a"/><ellipse cx="494.3" cy="347.5" rx="2.5" ry="1.7" fill="#635a52"/><ellipse cx="495.4" cy="340.3" rx="1.0" ry="1.8" fill="#756c64"/><ellipse cx="324.8" cy="330.7" rx="2.0" ry="2.0" fill="#675e56"/><ellipse cx="279.7" cy="325.3" rx="2.0" ry="1.9" fill="#80776e"/><ellipse cx="352.6" cy="347.1" rx="2.9" ry="0.7" fill="#847a71"/><ellipse cx="294.9" cy="311.4" rx="0.8" ry="1.0" fill="#978d84"/><ellipse cx="443.9" cy="351.4" rx="1.8" ry="1.6" fill="#554d45"/><ellipse cx="436.4" cy="337.5" rx="1.3" ry="1.0" fill="#898077"/><ellipse cx="240.2" cy="334.4" rx="1.4" ry="2.0" fill="#585048"/><ellipse cx="422.4" cy="328.7" rx="2.1" ry="1.6" fill="#81776e"/><ellipse cx="322.0" cy="298.6" rx="0.8" ry="1.1" fill="#4c433c"/><ellipse cx="274.1" cy="301.4" rx="2.9" ry="1.6" fill="#726960"/><ellipse cx="312.9" cy="338.9" rx="1.0" ry="1.0" fill="#564d46"/><ellipse cx="353.0" cy="334.3" rx="2.4" ry="0.7" fill="#6e655c"/><ellipse cx="508.0" cy="314.5" rx="0.9" ry="1.8" fill="#90877d"/><ellipse cx="299.0" cy="343.7" rx="2.3" ry="1.0" fill="#8e847b"/><ellipse cx="234.9" cy="305.8" rx="1.1" ry="1.5" fill="#978d83"/><ellipse cx="405.7" cy="332.7" rx="1.1" ry="0.7" fill="#564d46"/><ellipse cx="522.9" cy="316.8" rx="2.1" ry="0.9" fill="#80776e"/><ellipse cx="251.2" cy="295.8" rx="1.1" ry="1.9" fill="#92897f"/><ellipse cx="339.6" cy="336.2" rx="2.5" ry="1.0" fill="#524a42"/><ellipse cx="340.4" cy="324.8" rx="1.3" ry="1.7" fill="#504740"/><ellipse cx="316.4" cy="316.7" rx="1.3" ry="0.9" fill="#8a8178"/><ellipse cx="296.8" cy="316.9" rx="2.2" ry="1.3" fill="#665e56"/><ellipse cx="489.4" cy="297.9" rx="2.6" ry="0.9" fill="#81786f"/><ellipse cx="240.7" cy="320.0" rx="1.8" ry="1.6" fill="#504840"/><ellipse cx="259.7" cy="301.7" rx="1.2" ry="0.9" fill="#71685f"/><ellipse cx="362.3" cy="301.7" rx="1.6" ry="1.3" fill="#4c433c"/><ellipse cx="509.2" cy="326.6" rx="1.3" ry="1.6" fill="#4c443d"/><ellipse cx="398.6" cy="344.6" rx="2.7" ry="0.8" fill="#9c9288"/><ellipse cx="511.3" cy="324.9" rx="1.2" ry="1.8" fill="#5b534b"/><ellipse cx="294.9" cy="299.7" rx="2.8" ry="1.2" fill="#5d554d"/><ellipse cx="448.5" cy="299.2" rx="1.5" ry="0.9" fill="#6e655d"/><ellipse cx="428.2" cy="315.6" rx="3.0" ry="1.3" fill="#504841"/><ellipse cx="285.3" cy="295.6" rx="1.9" ry="0.6" fill="#80776e"/><ellipse cx="371.2" cy="337.2" rx="1.3" ry="1.3" fill="#766d64"/><ellipse cx="411.1" cy="332.1" rx="2.6" ry="1.9" fill="#534a43"/><ellipse cx="451.2" cy="343.9" rx="2.8" ry="0.9" fill="#675e56"/><ellipse cx="299.2" cy="329.1" rx="1.0" ry="0.9" fill="#978d83"/><ellipse cx="242.6" cy="320.0" rx="1.2" ry="1.6" fill="#524a42"/><ellipse cx="404.7" cy="348.5" rx="2.3" ry="0.6" fill="#6a6159"/><ellipse cx="512.7" cy="308.3" rx="1.9" ry="1.9" fill="#70675f"/><ellipse cx="377.7" cy="351.5" rx="1.3" ry="1.8" fill="#7d746b"/><ellipse cx="291.8" cy="352.0" rx="1.3" ry="1.9" fill="#6f665d"/><ellipse cx="327.2" cy="318.2" rx="2.3" ry="0.6" fill="#645c54"/><ellipse cx="342.7" cy="304.2" rx="0.8" ry="1.5" fill="#90867d"/><ellipse cx="308.3" cy="320.9" rx="2.4" ry="0.8" fill="#786f66"/><ellipse cx="303.2" cy="301.9" rx="1.1" ry="0.8" fill="#9c9288"/><ellipse cx="386.6" cy="328.1" rx="0.9" ry="0.9" fill="#958c82"/><ellipse cx="281.6" cy="328.4" rx="1.7" ry="1.8" fill="#6e655d"/><ellipse cx="427.9" cy="344.0" rx="1.4" ry="1.9" fill="#9c9288"/><ellipse cx="352.7" cy="297.9" rx="1.0" ry="0.6" fill="#988e84"/><ellipse cx="317.7" cy="311.5" rx="2.7" ry="1.2" fill="#9d9389"/><ellipse cx="388.7" cy="343.4" rx="2.2" ry="1.3" fill="#8e857b"/><ellipse cx="266.5" cy="308.9" rx="2.1" ry="1.7" fill="#81776e"/><ellipse cx="498.0" cy="349.9" rx="1.0" ry="1.9" fill="#574e47"/><ellipse cx="400.8" cy="305.3" rx="1.4" ry="0.9" fill="#847a71"/><ellipse cx="340.4" cy="324.9" rx="1.0" ry="1.6" fill="#827970"/><ellipse cx="416.8" cy="321.9" rx="2.6" ry="0.6" fill="#827970"/><ellipse cx="372.7" cy="333.6" rx="2.2" ry="0.9" fill="#857c73"/><ellipse cx="515.7" cy="339.8" rx="1.7" ry="1.9" fill="#5a524a"/><ellipse cx="293.3" cy="318.3" rx="2.8" ry="0.9" fill="#9c9288"/><ellipse cx="449.6" cy="315.5" rx="2.5" ry="0.8" fill="#81786f"/><ellipse cx="297.9" cy="307.3" rx="0.9" ry="0.8" fill="#5d554d"/><ellipse cx="352.2" cy="319.0" rx="2.1" ry="1.9" fill="#4d443d"/><ellipse cx="402.8" cy="315.3" rx="1.8" ry="0.8" fill="#857b72"/><ellipse cx="374.6" cy="296.0" rx="1.2" ry="1.1" fill="#827970"/><ellipse cx="516.9" cy="338.7" rx="2.2" ry="1.5" fill="#91877e"/><ellipse cx="440.6" cy="350.1" rx="2.5" ry="1.0" fill="#574f47"/><ellipse cx="307.7" cy="341.8" rx="2.7" ry="1.8" fill="#7c726a"/><ellipse cx="406.3" cy="306.3" rx="2.0" ry="1.6" fill="#473f38"/><ellipse cx="312.6" cy="299.0" rx="1.2" ry="1.6" fill="#463e37"/><ellipse cx="233.2" cy="308.1" rx="2.4" ry="2.0" fill="#5d554d"/><ellipse cx="237.7" cy="301.5" rx="2.9" ry="0.8" fill="#9a9086"/><ellipse cx="331.3" cy="324.8" rx="1.7" ry="1.3" fill="#625a52"/><ellipse cx="308.5" cy="298.1" rx="1.2" ry="0.7" fill="#4d453e"/><ellipse cx="416.7" cy="334.7" rx="2.5" ry="1.6" fill="#5d554d"/><ellipse cx="333.1" cy="323.0" rx="2.8" ry="1.4" fill="#564e47"/><ellipse cx="247.2" cy="303.8" rx="1.6" ry="1.6" fill="#847a71"/><ellipse cx="299.9" cy="340.4" rx="1.0" ry="1.4" fill="#8e847b"/><ellipse cx="288.6" cy="335.3" rx="2.5" ry="0.9" fill="#8e847b"/><ellipse cx="259.6" cy="332.8" rx="1.1" ry="0.9" fill="#786f67"/><ellipse cx="404.4" cy="301.2" rx="1.3" ry="1.0" fill="#7f756c"/><ellipse cx="357.3" cy="325.4" rx="0.9" ry="1.6" fill="#877d74"/><ellipse cx="297.4" cy="311.6" rx="2.3" ry="1.5" fill="#7f766d"/><ellipse cx="498.9" cy="306.7" rx="2.3" ry="1.0" fill="#625951"/><ellipse cx="278.6" cy="307.9" rx="2.6" ry="1.6" fill="#8b8178"/><ellipse cx="515.8" cy="340.3" rx="1.5" ry="1.6" fill="#615951"/><ellipse cx="248.5" cy="329.7" rx="0.9" ry="1.3" fill="#4e453e"/><ellipse cx="276.8" cy="348.1" rx="1.8" ry="0.9" fill="#948b81"/><ellipse cx="267.4" cy="323.9" rx="1.6" ry="1.6" fill="#746b63"/><ellipse cx="388.7" cy="339.2" rx="1.0" ry="1.1" fill="#4f4740"/><ellipse cx="375.1" cy="309.4" rx="1.3" ry="1.0" fill="#82786f"/><ellipse cx="373.2" cy="335.6" rx="1.6" ry="1.2" fill="#8b8178"/><ellipse cx="506.6" cy="348.2" rx="1.0" ry="1.2" fill="#7d746b"/><ellipse cx="420.5" cy="310.9" rx="3.0" ry="1.9" fill="#49413a"/><ellipse cx="270.2" cy="321.6" rx="1.5" ry="0.7" fill="#7d746b"/><ellipse cx="454.2" cy="338.9" rx="1.0" ry="1.2" fill="#6d645c"/><ellipse cx="259.8" cy="349.9" rx="1.4" ry="1.7" fill="#4a423b"/><ellipse cx="272.0" cy="301.1" rx="1.2" ry="1.3" fill="#4c443d"/><ellipse cx="478.6" cy="304.6" rx="2.5" ry="1.2" fill="#554d45"/><ellipse cx="332.1" cy="302.0" rx="2.9" ry="0.8" fill="#5b534b"/><ellipse cx="308.8" cy="337.2" rx="2.8" ry="1.3" fill="#968c82"/><ellipse cx="515.1" cy="329.4" rx="1.8" ry="1.6" fill="#5f574f"/><ellipse cx="449.3" cy="302.4" rx="2.9" ry="0.7" fill="#574f47"/><ellipse cx="472.8" cy="314.3" rx="1.4" ry="1.3" fill="#5c534c"/><ellipse cx="525.2" cy="303.5" rx="1.5" ry="0.8" fill="#92897f"/><ellipse cx="452.4" cy="314.5" rx="1.7" ry="1.8" fill="#564e46"/><ellipse cx="487.5" cy="327.8" rx="2.5" ry="1.4" fill="#463e37"/><ellipse cx="498.2" cy="349.3" rx="2.7" ry="1.7" fill="#635a52"/><ellipse cx="310.7" cy="315.9" rx="1.6" ry="1.1" fill="#675e56"/><ellipse cx="264.6" cy="307.9" rx="1.7" ry="1.5" fill="#978e84"/><ellipse cx="494.6" cy="338.1" rx="2.8" ry="1.7" fill="#5b534b"/><ellipse cx="525.2" cy="336.5" rx="2.6" ry="1.0" fill="#898077"/><ellipse cx="426.2" cy="316.7" rx="1.1" ry="1.4" fill="#91877e"/><ellipse cx="331.6" cy="341.8" rx="2.7" ry="1.8" fill="#655c54"/><ellipse cx="492.1" cy="302.9" rx="2.4" ry="1.5" fill="#9a9086"/><ellipse cx="425.1" cy="297.7" rx="2.0" ry="1.2" fill="#948a80"/><ellipse cx="332.4" cy="339.6" rx="2.7" ry="0.9" fill="#8c8279"/><ellipse cx="332.8" cy="309.2" rx="1.5" ry="0.6" fill="#4f463f"/><ellipse cx="467.8" cy="307.9" rx="0.9" ry="1.6" fill="#4c443d"/><ellipse cx="290.7" cy="321.3" rx="2.6" ry="1.9" fill="#6a6159"/><ellipse cx="323.7" cy="331.0" rx="1.8" ry="1.9" fill="#968c83"/><ellipse cx="449.2" cy="312.8" rx="2.1" ry="0.7" fill="#948a81"/><ellipse cx="405.9" cy="342.3" rx="1.9" ry="1.2" fill="#746b63"/><ellipse cx="492.6" cy="332.9" rx="1.6" ry="1.1" fill="#585048"/><ellipse cx="515.8" cy="334.7" rx="2.8" ry="0.6" fill="#514841"/><ellipse cx="406.9" cy="319.6" rx="1.7" ry="0.7" fill="#867d73"/><ellipse cx="387.0" cy="341.8" rx="1.6" ry="0.9" fill="#8c837a"/><ellipse cx="452.5" cy="340.7" rx="2.7" ry="2.0" fill="#595149"/><ellipse cx="360.3" cy="316.7" rx="2.8" ry="0.9" fill="#857c73"/><ellipse cx="321.3" cy="313.8" rx="1.2" ry="1.4" fill="#877e75"/><ellipse cx="380.1" cy="333.1" rx="2.9" ry="2.0" fill="#524a43"/><ellipse cx="398.1" cy="340.3" rx="2.8" ry="1.4" fill="#564e46"/><ellipse cx="456.8" cy="344.5" rx="2.8" ry="0.9" fill="#665d55"/><ellipse cx="238.9" cy="323.6" rx="2.8" ry="1.9" fill="#968d83"/><ellipse cx="383.2" cy="348.2" rx="1.1" ry="1.5" fill="#786f66"/><ellipse cx="469.8" cy="319.2" rx="1.4" ry="1.0" fill="#7c726a"/><ellipse cx="356.4" cy="324.3" rx="1.0" ry="0.6" fill="#70675e"/><ellipse cx="332.7" cy="335.9" rx="1.3" ry="1.0" fill="#897f76"/><ellipse cx="384.9" cy="305.0" rx="2.8" ry="0.9" fill="#7c736a"/><ellipse cx="405.3" cy="336.1" rx="2.4" ry="1.6" fill="#897f76"/><ellipse cx="312.7" cy="342.8" rx="0.9" ry="1.9" fill="#998f85"/><ellipse cx="363.0" cy="299.9" rx="2.6" ry="1.5" fill="#4c443c"/><ellipse cx="274.1" cy="321.2" rx="3.0" ry="1.1" fill="#7f766d"/><ellipse cx="458.9" cy="309.0" rx="1.2" ry="1.2" fill="#574f47"/><ellipse cx="415.0" cy="312.3" rx="1.3" ry="0.7" fill="#544c44"/><ellipse cx="289.2" cy="313.0" rx="1.2" ry="1.3" fill="#736a61"/><ellipse cx="362.2" cy="350.5" rx="2.9" ry="1.3" fill="#716860"/><ellipse cx="290.6" cy="328.7" rx="1.2" ry="0.7" fill="#534a43"/><ellipse cx="439.6" cy="350.1" rx="1.6" ry="1.2" fill="#6a6159"/><ellipse cx="336.2" cy="334.4" rx="1.1" ry="1.8" fill="#696058"/><ellipse cx="401.5" cy="295.4" rx="2.4" ry="1.1" fill="#92887f"/><ellipse cx="418.5" cy="347.5" rx="1.8" ry="1.0" fill="#6a6159"/><ellipse cx="396.0" cy="332.8" rx="2.9" ry="0.8" fill="#887e75"/><ellipse cx="340.3" cy="343.5" rx="2.1" ry="1.5" fill="#8d837a"/><ellipse cx="332.7" cy="348.9" rx="1.7" ry="0.9" fill="#776e65"/><ellipse cx="266.2" cy="346.2" rx="0.9" ry="1.1" fill="#8e847b"/><ellipse cx="374.0" cy="323.3" rx="2.8" ry="1.1" fill="#665d55"/><ellipse cx="389.5" cy="348.0" rx="1.8" ry="1.1" fill="#7f766d"/><ellipse cx="346.6" cy="329.7" rx="1.4" ry="1.1" fill="#8c8379"/><ellipse cx="346.8" cy="315.7" rx="2.0" ry="1.0" fill="#988e84"/><ellipse cx="330.4" cy="341.8" rx="2.3" ry="0.6" fill="#544c44"/><ellipse cx="289.2" cy="298.4" rx="1.1" ry="0.9" fill="#8e847b"/><ellipse cx="249.0" cy="310.0" rx="2.4" ry="1.9" fill="#887e75"/><ellipse cx="512.3" cy="326.4" rx="1.0" ry="1.9" fill="#988f85"/><ellipse cx="360.5" cy="306.0" rx="2.7" ry="1.1" fill="#897f76"/><ellipse cx="259.6" cy="344.8" rx="2.1" ry="2.0" fill="#898077"/><ellipse cx="243.3" cy="298.2" rx="0.8" ry="1.6" fill="#514841"/><ellipse cx="418.5" cy="301.4" rx="1.2" ry="1.5" fill="#544c44"/><ellipse cx="431.1" cy="350.3" rx="3.0" ry="1.2" fill="#665d55"/><ellipse cx="347.7" cy="309.4" rx="2.9" ry="2.0" fill="#5a524a"/><ellipse cx="440.9" cy="305.0" rx="1.1" ry="1.1" fill="#564d46"/><ellipse cx="450.2" cy="298.4" rx="2.3" ry="0.6" fill="#756c64"/><ellipse cx="362.1" cy="340.1" rx="1.8" ry="1.8" fill="#797067"/><ellipse cx="409.9" cy="314.2" rx="2.9" ry="1.8" fill="#696058"/><ellipse cx="502.8" cy="327.0" rx="1.2" ry="1.1" fill="#524a43"/><ellipse cx="436.4" cy="295.3" rx="2.5" ry="1.3" fill="#8e847b"/><ellipse cx="233.7" cy="340.5" rx="2.3" ry="1.4" fill="#6b625a"/><ellipse cx="447.6" cy="318.3" rx="2.9" ry="1.9" fill="#9c9288"/><ellipse cx="414.1" cy="313.0" rx="1.4" ry="1.9" fill="#675f57"/><ellipse cx="466.5" cy="339.9" rx="3.0" ry="1.6" fill="#8f867c"/><ellipse cx="326.2" cy="338.2" rx="2.1" ry="0.8" fill="#5d554d"/><ellipse cx="485.9" cy="322.9" rx="2.8" ry="0.7" fill="#5e564e"/><ellipse cx="507.3" cy="338.1" rx="2.5" ry="1.4" fill="#534b43"/><ellipse cx="500.5" cy="328.4" rx="2.9" ry="0.7" fill="#6c635b"/><ellipse cx="462.0" cy="300.9" rx="1.1" ry="1.8" fill="#5e564e"/><ellipse cx="362.8" cy="336.4" rx="2.4" ry="1.5" fill="#5d544c"/><ellipse cx="260.9" cy="323.1" rx="1.3" ry="1.5" fill="#867d74"/><ellipse cx="314.3" cy="316.1" rx="2.9" ry="2.0" fill="#988e85"/><ellipse cx="358.3" cy="327.6" rx="2.5" ry="1.2" fill="#8e857b"/><ellipse cx="487.6" cy="317.9" rx="1.8" ry="0.8" fill="#9b9187"/><ellipse cx="453.7" cy="303.3" rx="0.9" ry="2.0" fill="#837970"/><ellipse cx="392.1" cy="337.2" rx="2.2" ry="1.1" fill="#514942"/><ellipse cx="305.7" cy="341.5" rx="1.9" ry="0.7" fill="#484039"/><ellipse cx="484.0" cy="345.9" rx="1.8" ry="1.3" fill="#494139"/><ellipse cx="444.7" cy="336.6" rx="2.9" ry="0.9" fill="#645c54"/><ellipse cx="272.4" cy="341.4" rx="1.2" ry="1.3" fill="#504841"/><ellipse cx="331.6" cy="304.3" rx="1.8" ry="1.7" fill="#998f86"/><ellipse cx="306.1" cy="347.0" rx="2.8" ry="1.5" fill="#595149"/><ellipse cx="519.4" cy="339.0" rx="2.0" ry="1.8" fill="#7e756c"/><ellipse cx="363.3" cy="300.6" rx="2.6" ry="1.6" fill="#988e84"/><ellipse cx="452.4" cy="308.2" rx="2.6" ry="1.9" fill="#6f665e"/><ellipse cx="505.3" cy="304.1" rx="2.0" ry="1.2" fill="#837a71"/><ellipse cx="281.7" cy="302.8" rx="1.9" ry="1.0" fill="#70675e"/><ellipse cx="340.8" cy="326.6" rx="2.1" ry="0.8" fill="#8a8177"/><ellipse cx="494.3" cy="316.0" rx="3.0" ry="0.8" fill="#9c9288"/><ellipse cx="404.4" cy="350.1" rx="2.0" ry="1.0" fill="#685f57"/><ellipse cx="240.5" cy="306.7" rx="1.4" ry="1.5" fill="#514841"/><ellipse cx="398.7" cy="349.0" rx="1.6" ry="1.9" fill="#837a71"/><ellipse cx="419.7" cy="326.0" rx="2.3" ry="1.1" fill="#938980"/><ellipse cx="411.0" cy="312.1" rx="1.3" ry="2.0" fill="#9d9389"/><ellipse cx="251.1" cy="295.6" rx="1.3" ry="1.3" fill="#776e66"/><ellipse cx="267.0" cy="342.7" rx="2.3" ry="1.9" fill="#82786f"/><ellipse cx="525.7" cy="333.7" rx="0.8" ry="0.7" fill="#867c73"/><ellipse cx="358.3" cy="350.2" rx="2.1" ry="0.6" fill="#625951"/><ellipse cx="355.1" cy="346.4" rx="2.6" ry="0.6" fill="#7b7169"/><ellipse cx="292.0" cy="305.2" rx="1.0" ry="1.9" fill="#90877d"/><ellipse cx="311.2" cy="345.2" rx="1.5" ry="2.0" fill="#746b62"/><ellipse cx="351.9" cy="334.8" rx="2.6" ry="2.0" fill="#4c433c"/><ellipse cx="264.7" cy="337.5" rx="1.1" ry="1.1" fill="#5e554d"/><ellipse cx="427.9" cy="349.4" rx="3.0" ry="1.5" fill="#9f958b"/><ellipse cx="425.4" cy="304.2" rx="2.0" ry="1.1" fill="#877d74"/><ellipse cx="498.4" cy="309.5" rx="1.1" ry="0.8" fill="#524a43"/><ellipse cx="406.2" cy="340.6" rx="1.9" ry="1.4" fill="#544c44"/><ellipse cx="397.9" cy="318.5" rx="0.8" ry="0.7" fill="#766d65"/><ellipse cx="357.1" cy="308.5" rx="1.3" ry="1.8" fill="#8a8077"/><ellipse cx="303.5" cy="300.3" rx="1.7" ry="1.1" fill="#70685f"/><ellipse cx="458.5" cy="307.7" rx="2.6" ry="1.2" fill="#82786f"/><ellipse cx="380.9" cy="347.6" rx="1.2" ry="0.7" fill="#7c736a"/><ellipse cx="256.3" cy="313.9" rx="2.2" ry="1.2" fill="#4d453e"/><ellipse cx="323.3" cy="324.2" rx="1.3" ry="0.8" fill="#9a9086"/><ellipse cx="322.4" cy="313.5" rx="2.4" ry="1.2" fill="#978e84"/><ellipse cx="281.1" cy="297.6" rx="2.7" ry="1.5" fill="#514841"/><ellipse cx="278.3" cy="330.6" rx="1.9" ry="1.1" fill="#4b433b"/><ellipse cx="262.3" cy="337.3" rx="1.9" ry="0.8" fill="#867d73"/><ellipse cx="430.2" cy="319.7" rx="1.0" ry="1.9" fill="#81786f"/><ellipse cx="233.1" cy="307.7" rx="1.2" ry="0.7" fill="#696158"/><ellipse cx="435.5" cy="351.6" rx="1.4" ry="1.5" fill="#645b53"/><ellipse cx="297.9" cy="317.8" rx="1.7" ry="0.8" fill="#837a71"/><ellipse cx="252.9" cy="326.0" rx="2.8" ry="0.7" fill="#9f958b"/><ellipse cx="380.7" cy="322.8" rx="2.3" ry="1.3" fill="#574f47"/><ellipse cx="471.4" cy="311.6" rx="2.6" ry="1.3" fill="#9a9086"/><ellipse cx="273.8" cy="322.6" rx="2.3" ry="1.6" fill="#514941"/><ellipse cx="403.1" cy="350.6" rx="2.4" ry="1.7" fill="#4a413a"/><ellipse cx="265.4" cy="313.4" rx="2.1" ry="1.6" fill="#4a423b"/><ellipse cx="335.0" cy="334.6" rx="2.4" ry="1.0" fill="#675e56"/><ellipse cx="521.5" cy="320.0" rx="1.0" ry="1.6" fill="#463e37"/><ellipse cx="488.0" cy="331.3" rx="2.7" ry="1.6" fill="#534b44"/><ellipse cx="266.1" cy="316.7" rx="0.8" ry="0.7" fill="#827970"/><ellipse cx="336.7" cy="344.9" rx="1.5" ry="1.9" fill="#9f958b"/><ellipse cx="464.7" cy="344.3" rx="2.9" ry="1.5" fill="#7a7168"/><ellipse cx="512.6" cy="327.3" rx="1.9" ry="1.3" fill="#574f47"/><ellipse cx="331.9" cy="316.3" rx="2.1" ry="0.9" fill="#736a62"/><ellipse cx="314.1" cy="323.7" rx="1.7" ry="1.5" fill="#736a61"/><ellipse cx="286.9" cy="325.3" rx="2.5" ry="1.6" fill="#5e564e"/><ellipse cx="463.2" cy="324.5" rx="2.8" ry="1.3" fill="#5c534c"/><ellipse cx="343.1" cy="311.6" rx="2.4" ry="1.7" fill="#6a6159"/><ellipse cx="374.8" cy="336.7" rx="1.8" ry="1.1" fill="#595049"/><ellipse cx="322.7" cy="315.5" rx="2.4" ry="0.9" fill="#898077"/><ellipse cx="301.2" cy="339.7" rx="2.3" ry="1.5" fill="#80776e"/><ellipse cx="437.3" cy="310.5" rx="1.6" ry="0.6" fill="#4b433c"/><ellipse cx="516.7" cy="324.9" rx="2.9" ry="1.7" fill="#82786f"/><ellipse cx="299.9" cy="314.2" rx="2.6" ry="1.6" fill="#4f4740"/><ellipse cx="376.3" cy="316.0" rx="1.9" ry="1.6" fill="#5e554d"/><ellipse cx="497.0" cy="343.4" rx="1.8" ry="1.2" fill="#948a80"/><ellipse cx="325.0" cy="350.5" rx="1.1" ry="1.0" fill="#564e46"/><ellipse cx="504.9" cy="343.6" rx="2.7" ry="1.8" fill="#635b53"/><ellipse cx="358.5" cy="306.0" rx="1.6" ry="0.8" fill="#8b8278"/><ellipse cx="499.2" cy="320.1" rx="2.1" ry="1.0" fill="#696058"/><ellipse cx="238.0" cy="317.2" rx="0.8" ry="1.1" fill="#685f57"/><ellipse cx="457.3" cy="314.0" rx="2.2" ry="0.9" fill="#837970"/><ellipse cx="238.0" cy="333.4" rx="1.4" ry="0.9" fill="#7c736a"/><ellipse cx="485.2" cy="346.8" rx="2.1" ry="1.4" fill="#5b524a"/><ellipse cx="327.3" cy="297.1" rx="2.2" ry="1.4" fill="#635a52"/><ellipse cx="383.0" cy="302.0" rx="1.5" ry="1.2" fill="#595049"/><ellipse cx="339.5" cy="346.4" rx="3.0" ry="0.9" fill="#504840"/><ellipse cx="485.5" cy="308.9" rx="1.6" ry="0.7" fill="#7a7168"/><ellipse cx="467.7" cy="341.2" rx="2.5" ry="1.3" fill="#5e554d"/><ellipse cx="524.2" cy="298.1" rx="1.3" ry="1.5" fill="#685f57"/><ellipse cx="462.3" cy="343.0" rx="1.7" ry="1.7" fill="#776e65"/><ellipse cx="263.0" cy="309.8" rx="1.8" ry="2.0" fill="#898076"/><ellipse cx="258.9" cy="321.3" rx="0.8" ry="0.7" fill="#595049"/><ellipse cx="258.9" cy="316.0" rx="1.9" ry="1.0" fill="#6c645b"/><ellipse cx="439.8" cy="324.4" rx="1.2" ry="1.3" fill="#9e948a"/><ellipse cx="378.1" cy="316.2" rx="1.3" ry="1.8" fill="#938980"/><ellipse cx="337.9" cy="314.1" rx="2.0" ry="1.0" fill="#7d746b"/><ellipse cx="257.0" cy="349.4" rx="1.1" ry="1.5" fill="#675e56"/><ellipse cx="389.5" cy="313.7" rx="2.7" ry="1.1" fill="#635a52"/><ellipse cx="355.6" cy="349.5" rx="1.7" ry="0.8" fill="#665d55"/><ellipse cx="428.1" cy="332.9" rx="1.7" ry="0.9" fill="#6e655c"/><ellipse cx="465.8" cy="321.1" rx="1.6" ry="1.6" fill="#90877d"/><ellipse cx="240.5" cy="307.5" rx="2.3" ry="1.5" fill="#9c9288"/><ellipse cx="379.1" cy="321.9" rx="1.2" ry="1.5" fill="#574f47"/><ellipse cx="437.4" cy="309.7" rx="1.1" ry="1.5" fill="#80766d"/><ellipse cx="282.8" cy="324.0" rx="2.0" ry="0.8" fill="#625951"/><ellipse cx="375.1" cy="330.1" rx="1.5" ry="1.6" fill="#524942"/><ellipse cx="393.7" cy="330.2" rx="2.1" ry="0.9" fill="#8c8279"/><ellipse cx="363.0" cy="342.3" rx="2.5" ry="1.1" fill="#796f67"/><ellipse cx="364.7" cy="350.3" rx="2.2" ry="0.7" fill="#8f867c"/><ellipse cx="413.1" cy="296.9" rx="2.9" ry="1.6" fill="#9a9086"/><ellipse cx="311.2" cy="343.2" rx="2.6" ry="1.3" fill="#554d46"/><ellipse cx="236.7" cy="345.7" rx="2.6" ry="1.6" fill="#6d645c"/><ellipse cx="389.7" cy="344.2" rx="2.8" ry="1.1" fill="#584f48"/><ellipse cx="239.7" cy="314.2" rx="1.0" ry="1.5" fill="#4b433c"/><ellipse cx="267.8" cy="304.1" rx="1.4" ry="1.9" fill="#60574f"/><ellipse cx="500.0" cy="344.6" rx="1.8" ry="1.7" fill="#9f958b"/><ellipse cx="315.2" cy="347.8" rx="2.4" ry="0.9" fill="#8e857b"/><ellipse cx="259.1" cy="347.7" rx="2.1" ry="1.8" fill="#776e65"/><ellipse cx="274.5" cy="334.9" rx="2.5" ry="1.2" fill="#6f665e"/><ellipse cx="290.2" cy="349.5" rx="2.4" ry="1.8" fill="#5f564e"/><ellipse cx="305.3" cy="334.6" rx="1.3" ry="0.9" fill="#696058"/><ellipse cx="514.4" cy="316.0" rx="1.9" ry="0.6" fill="#736a62"/><ellipse cx="455.1" cy="337.5" rx="1.6" ry="0.9" fill="#948b81"/><ellipse cx="334.8" cy="336.7" rx="1.7" ry="1.3" fill="#81776e"/><ellipse cx="277.6" cy="347.4" rx="1.9" ry="1.7" fill="#70675f"/><ellipse cx="290.6" cy="336.2" rx="2.6" ry="0.7" fill="#655d55"/><ellipse cx="313.7" cy="331.2" rx="1.6" ry="1.4" fill="#716860"/><ellipse cx="296.5" cy="319.9" rx="2.6" ry="1.0" fill="#463e37"/><ellipse cx="477.9" cy="326.5" rx="2.2" ry="0.8" fill="#7c726a"/><ellipse cx="462.1" cy="311.6" rx="2.5" ry="1.5" fill="#938980"/><ellipse cx="473.3" cy="319.9" rx="2.9" ry="0.9" fill="#827970"/><ellipse cx="261.8" cy="318.5" rx="1.1" ry="0.9" fill="#736a62"/><ellipse cx="488.5" cy="317.1" rx="1.2" ry="1.4" fill="#534b43"/><ellipse cx="288.2" cy="322.1" rx="1.8" ry="1.3" fill="#766d64"/><ellipse cx="479.7" cy="296.0" rx="1.2" ry="0.7" fill="#998f86"/><ellipse cx="459.2" cy="327.5" rx="1.3" ry="1.7" fill="#766d64"/><ellipse cx="322.7" cy="336.4" rx="2.1" ry="1.5" fill="#5a524a"/><ellipse cx="342.0" cy="322.4" rx="2.2" ry="1.6" fill="#4b433c"/><ellipse cx="277.4" cy="326.4" rx="1.0" ry="1.8" fill="#877e75"/><ellipse cx="489.6" cy="297.9" rx="1.0" ry="1.0" fill="#5c534c"/><ellipse cx="257.5" cy="322.9" rx="1.5" ry="1.2" fill="#5c544c"/><ellipse cx="342.0" cy="339.9" rx="1.1" ry="0.9" fill="#877d74"/><ellipse cx="234.4" cy="313.8" rx="2.3" ry="1.7" fill="#4f4740"/><ellipse cx="526.8" cy="306.9" rx="2.5" ry="1.2" fill="#49413a"/><ellipse cx="507.6" cy="317.4" rx="1.0" ry="1.9" fill="#625951"/><ellipse cx="383.6" cy="320.1" rx="2.5" ry="1.8" fill="#6d645c"/><ellipse cx="372.9" cy="305.2" rx="2.8" ry="1.2" fill="#6a6159"/><ellipse cx="427.6" cy="326.9" rx="2.1" ry="0.9" fill="#6f665e"/><ellipse cx="397.0" cy="344.3" rx="1.6" ry="1.8" fill="#4d453d"/><ellipse cx="521.6" cy="295.8" rx="2.2" ry="1.8" fill="#7e756c"/><ellipse cx="371.1" cy="302.5" rx="2.4" ry="1.6" fill="#615850"/><ellipse cx="292.6" cy="331.6" rx="2.2" ry="0.6" fill="#81776e"/><ellipse cx="362.7" cy="313.5" rx="1.5" ry="0.8" fill="#7b7269"/><ellipse cx="430.4" cy="311.4" rx="1.5" ry="1.4" fill="#8d837a"/><ellipse cx="471.2" cy="301.6" rx="0.9" ry="1.9" fill="#877e75"/><ellipse cx="239.4" cy="336.3" rx="1.2" ry="1.2" fill="#675e56"/><ellipse cx="380.4" cy="318.7" rx="2.0" ry="1.0" fill="#514841"/><ellipse cx="518.3" cy="316.8" rx="1.3" ry="2.0" fill="#6d645c"/><ellipse cx="327.2" cy="331.8" rx="1.7" ry="1.7" fill="#90877d"/><ellipse cx="314.5" cy="301.2" rx="1.8" ry="1.8" fill="#49413a"/><ellipse cx="292.1" cy="320.1" rx="1.4" ry="0.8" fill="#8a8177"/><ellipse cx="385.7" cy="319.2" rx="2.8" ry="0.9" fill="#9a9086"/><ellipse cx="398.0" cy="318.7" rx="1.8" ry="1.9" fill="#494039"/><ellipse cx="321.6" cy="328.4" rx="0.9" ry="1.9" fill="#857c73"/><ellipse cx="264.3" cy="312.2" rx="0.8" ry="1.1" fill="#867c73"/><ellipse cx="269.5" cy="322.0" rx="1.1" ry="0.9" fill="#473f38"/><ellipse cx="256.1" cy="300.2" rx="1.9" ry="0.8" fill="#574f47"/><ellipse cx="475.1" cy="318.8" rx="1.3" ry="1.8" fill="#5c544c"/><ellipse cx="245.9" cy="337.3" rx="2.9" ry="1.2" fill="#4e463f"/><ellipse cx="408.9" cy="344.2" rx="0.9" ry="1.6" fill="#4f463f"/><ellipse cx="405.9" cy="336.1" rx="1.9" ry="0.9" fill="#5f564e"/><ellipse cx="361.4" cy="311.1" rx="1.5" ry="1.0" fill="#7a7168"/><ellipse cx="422.2" cy="299.9" rx="1.9" ry="0.9" fill="#8e847b"/><ellipse cx="266.0" cy="324.0" rx="2.4" ry="1.1" fill="#736a61"/></g>
<g filter="url(#b4)">
  <path d="M478 300 C490 315 500 330 520 352" stroke="#6a9a45" stroke-width="2" fill="none"/>
  <ellipse cx="518" cy="338" rx="10" ry="14" fill="#79a84e"/>
  <ellipse cx="486" cy="318" rx="6" ry="5" fill="#79a84e"/>
</g>
</svg>

</div>

<div id="t4" class="a gray" style="left:34px;top:649.5px;font-size:23.2px;transform:scaleX(0.98);transform-origin:0 0;">Computation time on cpu: cached</div>

<!-- results -->
<div class="bar" style="top:709px;width:870px;"></div>
<div class="a mono" style="left:33px;top:732px;">tiger, Panthera tigris</div>
<div class="a mono sc" style="left:1137px;top:711px;">0.886</div>

<div class="bar" style="top:786px;width:108px;"></div>
<div class="a mono" style="left:33px;top:809px;">tiger cat</div>
<div class="a mono sc" style="left:1137px;top:788px;">0.109</div>

<div class="bar" style="top:863px;width:11px;"></div>
<div class="a mono" style="left:33px;top:886px;">jaguar, panther, Panthera onca, Felis onca</div>
<div class="a mono sc" style="left:1137px;top:865px;">0.001</div>

<div class="bar" style="top:940px;width:11px;"></div>
<div class="a mono" style="left:33px;top:963px;">dhole, Cuon alpinus</div>
<div class="a mono sc" style="left:1137px;top:942px;">0.000</div>

<div class="bar" style="top:1017px;width:11px;"></div>
<div class="a mono" style="left:33px;top:1040px;">lion, king of beasts, Panthera leo</div>
<div class="a mono sc" style="left:1137px;top:1019px;">0.000</div>

<!-- footer -->
<svg class="a" style="left:32px;top:1102px" width="30" height="24" viewBox="32 1102 30 24">
  <g fill="none" stroke="#9ca3af" stroke-width="1.5">
    <path d="M40 1109 L35.5 1113.9 L40 1118.8"/>
    <path d="M48.6 1106.4 L44 1121.4"/>
    <path d="M52.4 1109 L56.9 1113.9 L52.4 1118.8"/>
  </g>
</svg>
<div id="t5" class="a gray" style="left:65.5px;top:1103px;font-size:23px;transform:scaleX(0.96);transform-origin:0 0;">JSON Output</div>
<svg class="a" style="left:1084px;top:1103px" width="22" height="22" viewBox="1084 1103 22 22">
  <g fill="none" stroke="#9ca3af" stroke-width="1.8">
    <rect x="1086.8" y="1105.8" width="16.4" height="16.4" rx="2"/>
    <path d="M1095.1 1108.3 H1100.6 V1113.8"/>
    <path d="M1089.8 1114 V1119.4 H1095.2"/>
  </g>
</svg>
<div id="t6" class="a gray" style="left:1116px;top:1103px;font-size:23px;transform:scaleX(0.96);transform-origin:0 0;">Maximize</div>
</body>
</html>
